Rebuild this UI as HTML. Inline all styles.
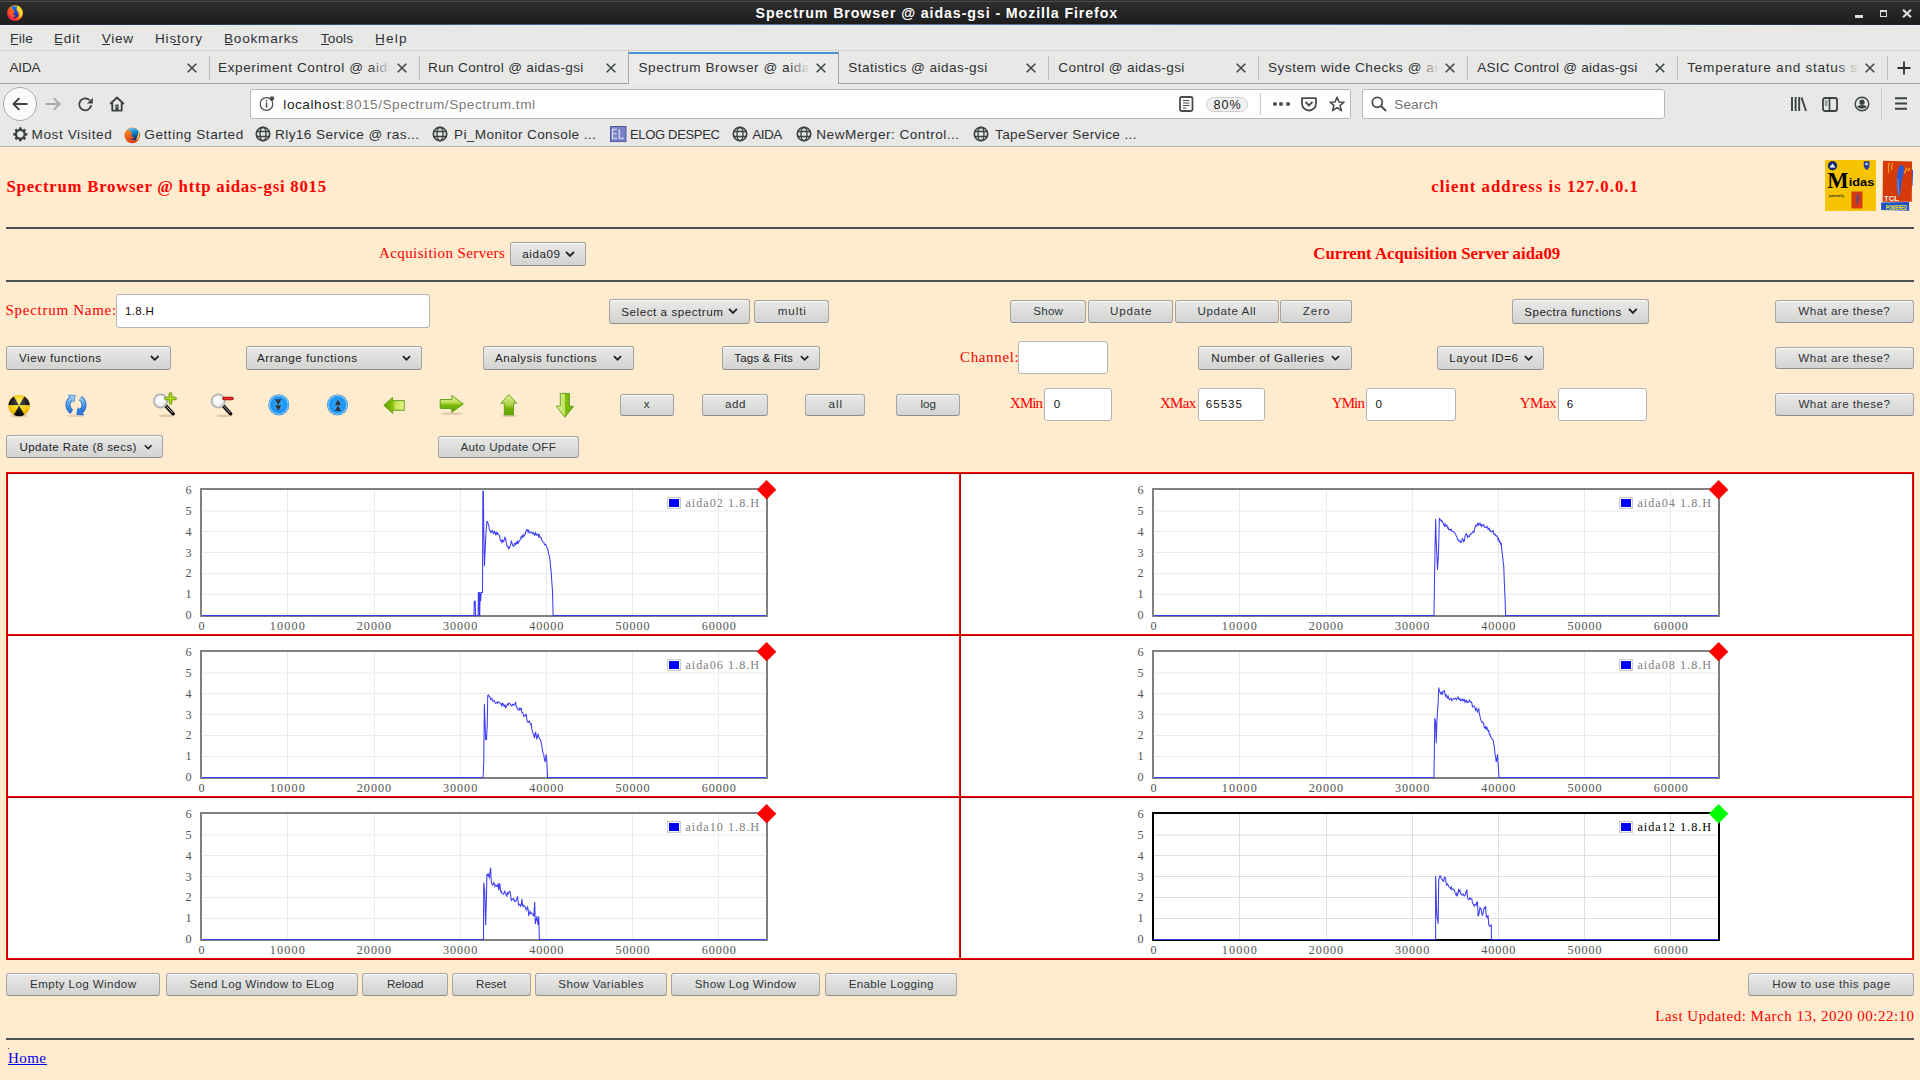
<!DOCTYPE html>
<html><head><meta charset="utf-8"><style>
*{margin:0;padding:0;box-sizing:border-box}
html,body{width:1920px;height:1080px;overflow:hidden;background:#ffebcd}
.t{position:absolute;white-space:pre}
.a{position:absolute}
.btn{position:absolute;border:1px solid #a4a4a4;border-bottom-color:#8e8e8e;border-radius:3px;background:linear-gradient(#e9e9e8,#d3d3d2);box-shadow:inset 0 1px 0 #fafafa}
.inp{position:absolute;border:1px solid #b4b4b4;border-radius:3px;background:#fff}
svg{position:absolute;overflow:visible}
</style></head><body>
<div class="a" style="left:0;top:0;width:1920px;height:25px;background:linear-gradient(#2f2f2f,#262626 12px,#1c1c1c)"></div>
<div class="a" style="left:0;top:1px;width:1920px;height:1px;background:#4e4e4e"></div>
<div class="a" style="left:0;top:24px;width:1920px;height:1px;background:linear-gradient(90deg,#1a2430,#4a6a94 30%,#5a7aa6 50%,#4a6a94 70%,#1a2430)"></div>
<svg style="left:7px;top:5px" width="16" height="16" viewBox="0 0 16 16">
<defs><linearGradient id="ffq" x1="0" y1="1" x2="1" y2="0"><stop offset="0" stop-color="#c8108f"/><stop offset="0.25" stop-color="#ff2a3a"/><stop offset="0.5" stop-color="#ff6a14"/><stop offset="0.75" stop-color="#ffc21a"/><stop offset="1" stop-color="#fff23a"/></linearGradient>
<linearGradient id="ffb" x1="0" y1="0" x2="0" y2="1"><stop offset="0" stop-color="#0a7cff"/><stop offset="1" stop-color="#2a1a9a"/></linearGradient></defs>
<circle cx="8" cy="8.2" r="7.9" fill="url(#ffq)"/>
<path d="M4 1.8 Q7 0.6 10.2 1.6 Q8.8 4 10.2 6 Q12.2 8 11.5 10.5 Q10.5 13 7.5 13.2 Q5 12.8 5.5 11.5 Q8 12 8.8 10.8 Q6.5 10.5 5.8 9.5 Q8 8 6.5 5.5 Q5.5 3.5 4 1.8Z" fill="url(#ffb)"/>
<path d="M10.2 0.6 Q14.5 2.5 15.4 7 Q15.5 11 12.5 13 Q13.5 9 11.5 6.5 Q9.5 4.5 10.2 0.6Z" fill="#ffe030" opacity="0.9"/>
<path d="M2 3 L3.5 4.5 L6.5 5 L7.5 6.8 L5.8 7.6 L5.5 10 L8.8 10.8 L6.5 12 Q3 11.5 2 8 Z" fill="#ff5a1a" opacity="0.85"/>
</svg>
<div class="t" style="left:755.60px;top:4.80px;font-family:'Liberation Sans', sans-serif;font-size:14.2px;line-height:16px;color:#ffffff;letter-spacing:0.913px;font-weight:bold;">Spectrum Browser @ aidas-gsi - Mozilla Firefox</div>
<div class="a" style="left:1855px;top:14.5px;width:8px;height:3px;background:#dcdcdc;box-shadow:0 0 1px #000"></div>
<div class="a" style="left:1879.5px;top:9.5px;width:7px;height:7px;border:1.5px solid #dcdcdc;border-top-width:2.5px"></div>
<svg style="left:1902px;top:8.5px" width="10" height="9" viewBox="0 0 10 9"><path d="M1 0.8 L9 8.2 M9 0.8 L1 8.2" stroke="#dcdcdc" stroke-width="2.2"/></svg>
<div class="a" style="left:0;top:25px;width:1920px;height:122px;background:#e8e8e7"></div>
<div class="a" style="left:0;top:50px;width:1920px;height:1px;background:#d4d4d3"></div>
<div class="t" style="left:10.10px;top:30.80px;font-family:'Liberation Sans', sans-serif;font-size:13.6px;line-height:15px;color:#2e3134;letter-spacing:0.252px;">File</div>
<div class="t" style="left:54.00px;top:30.80px;font-family:'Liberation Sans', sans-serif;font-size:13.6px;line-height:15px;color:#2e3134;letter-spacing:0.784px;">Edit</div>
<div class="t" style="left:101.70px;top:30.80px;font-family:'Liberation Sans', sans-serif;font-size:13.6px;line-height:15px;color:#2e3134;letter-spacing:0.733px;">View</div>
<div class="t" style="left:155.00px;top:30.80px;font-family:'Liberation Sans', sans-serif;font-size:13.6px;line-height:15px;color:#2e3134;letter-spacing:0.800px;">History</div>
<div class="t" style="left:224.00px;top:30.80px;font-family:'Liberation Sans', sans-serif;font-size:13.6px;line-height:15px;color:#2e3134;letter-spacing:0.764px;">Bookmarks</div>
<div class="t" style="left:320.70px;top:30.80px;font-family:'Liberation Sans', sans-serif;font-size:13.6px;line-height:15px;color:#2e3134;letter-spacing:0.166px;">Tools</div>
<div class="t" style="left:375.00px;top:30.80px;font-family:'Liberation Sans', sans-serif;font-size:13.6px;line-height:15px;color:#2e3134;letter-spacing:1.201px;">Help</div>
<div class="a" style="left:11px;top:44px;width:7px;height:1px;background:#2e3134"></div>
<div class="a" style="left:55px;top:44px;width:7px;height:1px;background:#2e3134"></div>
<div class="a" style="left:101.5px;top:44px;width:8px;height:1px;background:#2e3134"></div>
<div class="a" style="left:172.5px;top:44px;width:7px;height:1px;background:#2e3134"></div>
<div class="a" style="left:225px;top:44px;width:8px;height:1px;background:#2e3134"></div>
<div class="a" style="left:320.5px;top:44px;width:8px;height:1px;background:#2e3134"></div>
<div class="a" style="left:376px;top:44px;width:8px;height:1px;background:#2e3134"></div>
<div class="a" style="left:0;top:83px;width:628px;height:1px;background:#a3a3a3"></div>
<div class="a" style="left:839px;top:83px;width:1081px;height:1px;background:#a3a3a3"></div>
<div class="a" style="left:628px;top:51px;width:211px;height:33px;background:#ebebea;border-left:1px solid #a8a8a8;border-right:1px solid #a8a8a8"></div>
<div class="a" style="left:629px;top:52px;width:209px;height:2px;background:#4a90d9"></div>
<div class="a" style="left:209px;top:56px;width:1px;height:24px;background:#bdbdbc"></div>
<div class="a" style="left:419px;top:56px;width:1px;height:24px;background:#bdbdbc"></div>
<div class="a" style="left:1048px;top:56px;width:1px;height:24px;background:#bdbdbc"></div>
<div class="a" style="left:1258px;top:56px;width:1px;height:24px;background:#bdbdbc"></div>
<div class="a" style="left:1467px;top:56px;width:1px;height:24px;background:#bdbdbc"></div>
<div class="a" style="left:1677px;top:56px;width:1px;height:24px;background:#bdbdbc"></div>
<div class="a" style="left:1887px;top:56px;width:1px;height:24px;background:#bdbdbc"></div>
<div class="a" style="left:0;top:0;width:181px;height:1080px;overflow:hidden"><div class="t" style="left:9.40px;top:59.90px;font-family:'Liberation Sans', sans-serif;font-size:13.6px;line-height:15px;color:#2e3134;letter-spacing:-0.174px;">AIDA</div></div>
<div class="a" style="left:159px;top:58px;width:22px;height:20px;background:linear-gradient(90deg,rgba(232,232,231,0),#e8e8e7)"></div>
<svg style="left:187px;top:63px" width="10" height="10" viewBox="0 0 10 10"><path d="M0.7 0.7 L9.3 9.3 M9.3 0.7 L0.7 9.3" stroke="#3d4245" stroke-width="1.5"/></svg>
<div class="a" style="left:0;top:0;width:391px;height:1080px;overflow:hidden"><div class="t" style="left:218.00px;top:59.90px;font-family:'Liberation Sans', sans-serif;font-size:13.6px;line-height:15px;color:#2e3134;letter-spacing:0.579px;">Experiment Control @ aidas-gsi</div></div>
<div class="a" style="left:369px;top:58px;width:22px;height:20px;background:linear-gradient(90deg,rgba(232,232,231,0),#e8e8e7)"></div>
<svg style="left:397px;top:63px" width="10" height="10" viewBox="0 0 10 10"><path d="M0.7 0.7 L9.3 9.3 M9.3 0.7 L0.7 9.3" stroke="#3d4245" stroke-width="1.5"/></svg>
<div class="t" style="left:428.00px;top:59.90px;font-family:'Liberation Sans', sans-serif;font-size:13.6px;line-height:15px;color:#2e3134;letter-spacing:0.320px;">Run Control @ aidas-gsi</div>
<svg style="left:606px;top:63px" width="10" height="10" viewBox="0 0 10 10"><path d="M0.7 0.7 L9.3 9.3 M9.3 0.7 L0.7 9.3" stroke="#3d4245" stroke-width="1.5"/></svg>
<div class="a" style="left:0;top:0;width:810px;height:1080px;overflow:hidden"><div class="t" style="left:638.50px;top:59.90px;font-family:'Liberation Sans', sans-serif;font-size:13.6px;line-height:15px;color:#2e3134;letter-spacing:0.548px;">Spectrum Browser @ aidas-gsi</div></div>
<div class="a" style="left:788px;top:58px;width:22px;height:20px;background:linear-gradient(90deg,rgba(232,232,231,0),#ebebea)"></div>
<svg style="left:816px;top:63px" width="10" height="10" viewBox="0 0 10 10"><path d="M0.7 0.7 L9.3 9.3 M9.3 0.7 L0.7 9.3" stroke="#3d4245" stroke-width="1.5"/></svg>
<div class="t" style="left:848.30px;top:59.90px;font-family:'Liberation Sans', sans-serif;font-size:13.6px;line-height:15px;color:#2e3134;letter-spacing:0.423px;">Statistics @ aidas-gsi</div>
<svg style="left:1026px;top:63px" width="10" height="10" viewBox="0 0 10 10"><path d="M0.7 0.7 L9.3 9.3 M9.3 0.7 L0.7 9.3" stroke="#3d4245" stroke-width="1.5"/></svg>
<div class="t" style="left:1058.30px;top:59.90px;font-family:'Liberation Sans', sans-serif;font-size:13.6px;line-height:15px;color:#2e3134;letter-spacing:0.358px;">Control @ aidas-gsi</div>
<svg style="left:1236px;top:63px" width="10" height="10" viewBox="0 0 10 10"><path d="M0.7 0.7 L9.3 9.3 M9.3 0.7 L0.7 9.3" stroke="#3d4245" stroke-width="1.5"/></svg>
<div class="a" style="left:0;top:0;width:1439px;height:1080px;overflow:hidden"><div class="t" style="left:1268.00px;top:59.90px;font-family:'Liberation Sans', sans-serif;font-size:13.6px;line-height:15px;color:#2e3134;letter-spacing:0.514px;">System wide Checks @ aidas-gsi</div></div>
<div class="a" style="left:1417px;top:58px;width:22px;height:20px;background:linear-gradient(90deg,rgba(232,232,231,0),#e8e8e7)"></div>
<svg style="left:1445px;top:63px" width="10" height="10" viewBox="0 0 10 10"><path d="M0.7 0.7 L9.3 9.3 M9.3 0.7 L0.7 9.3" stroke="#3d4245" stroke-width="1.5"/></svg>
<div class="t" style="left:1477.30px;top:59.90px;font-family:'Liberation Sans', sans-serif;font-size:13.6px;line-height:15px;color:#2e3134;letter-spacing:0.215px;">ASIC Control @ aidas-gsi</div>
<svg style="left:1655px;top:63px" width="10" height="10" viewBox="0 0 10 10"><path d="M0.7 0.7 L9.3 9.3 M9.3 0.7 L0.7 9.3" stroke="#3d4245" stroke-width="1.5"/></svg>
<div class="a" style="left:0;top:0;width:1859px;height:1080px;overflow:hidden"><div class="t" style="left:1687.30px;top:59.90px;font-family:'Liberation Sans', sans-serif;font-size:13.6px;line-height:15px;color:#2e3134;letter-spacing:0.727px;">Temperature and status screen</div></div>
<div class="a" style="left:1837px;top:58px;width:22px;height:20px;background:linear-gradient(90deg,rgba(232,232,231,0),#e8e8e7)"></div>
<svg style="left:1865px;top:63px" width="10" height="10" viewBox="0 0 10 10"><path d="M0.7 0.7 L9.3 9.3 M9.3 0.7 L0.7 9.3" stroke="#3d4245" stroke-width="1.5"/></svg>
<svg style="left:1897px;top:61px" width="14" height="14" viewBox="0 0 14 14"><path d="M7 0.5 V13.5 M0.5 7 H13.5" stroke="#2e3134" stroke-width="1.8"/></svg>
<div class="a" style="left:3px;top:87px;width:34px;height:34px;border-radius:50%;background:#fafafa;border:1px solid #a9a9a9"></div>
<svg style="left:12px;top:97px" width="16" height="14" viewBox="0 0 16 14"><path d="M15.5 7 H1.5 M7.3 1.2 L1.5 7 L7.3 12.8" stroke="#3d4245" stroke-width="1.9" fill="none"/></svg>
<svg style="left:45px;top:97px" width="16" height="14" viewBox="0 0 16 14"><path d="M0.5 7 H14.5 M8.7 1.2 L14.5 7 L8.7 12.8" stroke="#a9a9a9" stroke-width="1.9" fill="none"/></svg>
<svg style="left:78px;top:97px" width="16" height="14" viewBox="0 0 16 14"><path d="M13.2 8.2 A6 6 0 1 1 11.6 3.2" stroke="#3d4245" stroke-width="1.9" fill="none"/><path d="M14.8 0.8 V6.6 H9 Z" fill="#3d4245"/></svg>
<svg style="left:109px;top:96px" width="16" height="16" viewBox="0 0 16 16"><path d="M1.2 8 L8 1.5 L14.8 8" stroke="#3d4245" stroke-width="1.9" fill="none" stroke-linejoin="round"/><path d="M3.3 7 V14.6 H12.7 V7" stroke="#3d4245" stroke-width="1.9" fill="none" stroke-linejoin="round"/><rect x="6.4" y="8.5" width="3.2" height="6" fill="#3d4245"/><rect x="7.5" y="10.3" width="1" height="1" fill="#ebebea"/></svg>
<div class="a" style="left:250px;top:89px;width:1101px;height:30px;background:#fff;border:1px solid #b8b8b8;border-radius:3px"></div>
<svg style="left:259px;top:95px" width="17" height="17" viewBox="0 0 17 17"><circle cx="7.5" cy="9" r="6.3" stroke="#4a4d50" stroke-width="1.2" fill="none"/><rect x="6.8" y="7.5" width="1.5" height="5" fill="#4a4d50"/><rect x="6.8" y="5" width="1.5" height="1.5" fill="#4a4d50"/><circle cx="13" cy="3.5" r="2.2" fill="#4a4d50"/></svg>
<div class="t" style="left:283.30px;top:97.20px;font-family:'Liberation Sans', sans-serif;font-size:13.6px;line-height:15px;color:#1a1a1a;letter-spacing:0.566px;">localhost</div>
<div class="t" style="left:341.50px;top:97.20px;font-family:'Liberation Sans', sans-serif;font-size:13.6px;line-height:15px;color:#7a7a7a;letter-spacing:0.527px;">:8015/Spectrum/Spectrum.tml</div>
<svg style="left:1179px;top:96px" width="15" height="16" viewBox="0 0 15 16"><rect x="1" y="1" width="12.5" height="14" rx="1.5" stroke="#4a4d50" stroke-width="1.8" fill="none"/><path d="M4 4.5 H10.5 M4 7 H10.5 M4 9.5 H10.5 M4 12 H7.5" stroke="#4a4d50" stroke-width="1"/></svg>
<div class="a" style="left:1206px;top:97px;width:42px;height:15px;border-radius:8px;background:#f0f0f0;border:1px solid #cfcfcf"></div>
<div class="t" style="left:1213.60px;top:98.00px;font-family:'Liberation Sans', sans-serif;font-size:12.6px;line-height:14px;color:#1a1a1a;letter-spacing:0.893px;">80%</div>
<div class="a" style="left:1260px;top:93px;width:1px;height:22px;background:#c8c8c8"></div>
<div class="a" style="left:1272.5px;top:102px;width:4px;height:4px;border-radius:50%;background:#4a4d50"></div>
<div class="a" style="left:1279px;top:102px;width:4px;height:4px;border-radius:50%;background:#4a4d50"></div>
<div class="a" style="left:1285.5px;top:102px;width:4px;height:4px;border-radius:50%;background:#4a4d50"></div>
<svg style="left:1301px;top:97px" width="16" height="15" viewBox="0 0 16 15"><path d="M1 1.2 H15 V6.5 A7 7 0 0 1 1 6.5 Z" stroke="#4a4d50" stroke-width="1.8" fill="none" stroke-linejoin="round"/><path d="M4.5 5 L8 8.5 L11.5 5" stroke="#4a4d50" stroke-width="1.8" fill="none"/></svg>
<svg style="left:1329px;top:96px" width="16" height="16" viewBox="0 0 16 16"><path d="M8 1.3 L10 6 L15 6.2 L11.1 9.4 L12.4 14.6 L8 11.7 L3.6 14.6 L4.9 9.4 L1 6.2 L6 6 Z" stroke="#4a4d50" stroke-width="1.6" fill="none" stroke-linejoin="round"/></svg>
<div class="a" style="left:1362px;top:89px;width:303px;height:30px;background:#fff;border:1px solid #b8b8b8;border-radius:3px"></div>
<svg style="left:1371px;top:96px" width="16" height="16" viewBox="0 0 16 16"><circle cx="6.3" cy="6.3" r="5" stroke="#4a4d50" stroke-width="1.8" fill="none"/><path d="M10 10 L15 15" stroke="#4a4d50" stroke-width="2"/></svg>
<div class="t" style="left:1394.30px;top:97.20px;font-family:'Liberation Sans', sans-serif;font-size:13.6px;line-height:15px;color:#737373;letter-spacing:0.098px;">Search</div>
<svg style="left:1791px;top:97px" width="16" height="15" viewBox="0 0 16 15"><path d="M1 0 V14 M4.6 0 V14 M8.2 0 V14 M10.5 0.5 L15 14" stroke="#3d4245" stroke-width="1.9"/></svg>
<svg style="left:1822px;top:97px" width="16" height="15" viewBox="0 0 16 15"><rect x="1" y="1" width="14" height="13" rx="2" stroke="#3d4245" stroke-width="1.8" fill="none"/><path d="M7.5 1 V14" stroke="#3d4245" stroke-width="1.6"/><path d="M2.8 4 H5.5 M2.8 6 H5.5 M2.8 8 H5.5" stroke="#3d4245" stroke-width="0.9"/></svg>
<svg style="left:1854px;top:96px" width="16" height="16" viewBox="0 0 16 16"><circle cx="8" cy="8" r="6.8" stroke="#3d4245" stroke-width="1.4" fill="none"/><circle cx="8" cy="6.2" r="2.6" fill="#3d4245"/><path d="M3.2 11 Q8 14.5 12.8 11 Q12 9 8 9 Q4 9 3.2 11Z" fill="#3d4245"/></svg>
<div class="a" style="left:1881px;top:87px;width:1px;height:33px;background:#cfcfcf"></div>
<svg style="left:1895px;top:97px" width="13" height="13" viewBox="0 0 13 13"><path d="M0 1.2 H12 M0 6.5 H12 M0 11.8 H12" stroke="#3d4245" stroke-width="1.9"/></svg>
<svg style="left:12.5px;top:127px" width="15" height="15" viewBox="0 0 15 15"><g transform="translate(7.3,7.3)"><circle r="4.4" stroke="#3d4245" stroke-width="2.2" fill="none"/><rect x="-1.3" y="-7" width="2.6" height="3.2" fill="#3d4245" transform="rotate(0)"/><rect x="-1.3" y="-7" width="2.6" height="3.2" fill="#3d4245" transform="rotate(45)"/><rect x="-1.3" y="-7" width="2.6" height="3.2" fill="#3d4245" transform="rotate(90)"/><rect x="-1.3" y="-7" width="2.6" height="3.2" fill="#3d4245" transform="rotate(135)"/><rect x="-1.3" y="-7" width="2.6" height="3.2" fill="#3d4245" transform="rotate(180)"/><rect x="-1.3" y="-7" width="2.6" height="3.2" fill="#3d4245" transform="rotate(225)"/><rect x="-1.3" y="-7" width="2.6" height="3.2" fill="#3d4245" transform="rotate(270)"/><rect x="-1.3" y="-7" width="2.6" height="3.2" fill="#3d4245" transform="rotate(315)"/></g></svg>
<div class="t" style="left:31.50px;top:126.80px;font-family:'Liberation Sans', sans-serif;font-size:13.6px;line-height:15px;color:#2e3134;letter-spacing:0.588px;">Most Visited</div>
<svg style="left:124px;top:127px" width="16" height="16" viewBox="0 0 16 16">
<defs><linearGradient id="fg2b" x1="0" y1="0" x2="0.3" y2="1"><stop offset="0" stop-color="#7ad0f8"/><stop offset="0.45" stop-color="#0a90d8"/><stop offset="1" stop-color="#0a2a80"/></linearGradient>
<linearGradient id="fg2o" x1="0" y1="0" x2="0.3" y2="1"><stop offset="0" stop-color="#ff9a20"/><stop offset="1" stop-color="#d8401a"/></linearGradient></defs>
<circle cx="8.2" cy="8.4" r="7.8" fill="url(#fg2o)"/>
<path d="M3.8 1.6 Q8 0.2 12.4 1.8 Q15.5 4.5 15.6 8.2 Q15 12 11.8 13 Q8.5 13.5 6.5 11.8 Q10 12 10.8 10.5 Q8 10 7.2 8.2 Q9 6.5 7.8 4.8 Q6 4.2 5 3.2 Q4.4 2.6 3.8 1.6Z" fill="url(#fg2b)"/>
<path d="M14.2 4.5 Q16.2 8.2 14.5 11.5 Q13 13 11.5 13.2 Q14 10.5 14.2 4.5Z" fill="#ffe23a"/>
</svg>
<div class="t" style="left:144.30px;top:126.80px;font-family:'Liberation Sans', sans-serif;font-size:13.6px;line-height:15px;color:#2e3134;letter-spacing:0.538px;">Getting Started</div>
<svg style="left:255px;top:126px" width="16" height="16" viewBox="0 0 16 16"><circle cx="8" cy="8" r="6.7" stroke="#3d4245" stroke-width="1.7" fill="none"/><ellipse cx="8" cy="8" rx="3" ry="6.7" stroke="#3d4245" stroke-width="1.4" fill="none"/><path d="M1.3 5.5 H14.7 M1.3 10.5 H14.7" stroke="#3d4245" stroke-width="1.4"/></svg>
<div class="t" style="left:275.00px;top:126.80px;font-family:'Liberation Sans', sans-serif;font-size:13.6px;line-height:15px;color:#2e3134;letter-spacing:0.412px;">Rly16 Service @ ras...</div>
<svg style="left:431.5px;top:126px" width="16" height="16" viewBox="0 0 16 16"><circle cx="8" cy="8" r="6.7" stroke="#3d4245" stroke-width="1.7" fill="none"/><ellipse cx="8" cy="8" rx="3" ry="6.7" stroke="#3d4245" stroke-width="1.4" fill="none"/><path d="M1.3 5.5 H14.7 M1.3 10.5 H14.7" stroke="#3d4245" stroke-width="1.4"/></svg>
<div class="t" style="left:454.00px;top:126.80px;font-family:'Liberation Sans', sans-serif;font-size:13.6px;line-height:15px;color:#2e3134;letter-spacing:0.383px;">Pi_Monitor Console ...</div>
<svg style="left:610px;top:126px" width="17" height="16" viewBox="0 0 17 16"><rect x="0.5" y="0.5" width="15.5" height="15" fill="#7a82c6" stroke="#5058a8" stroke-width="1"/><path d="M7 3.5 H2.8 V12.5 H7 M2.8 8 H6.5 M9.5 3.5 V12.5 H14" stroke="#e4e6f6" stroke-width="1.6" fill="none"/><path d="M7 3.5 H2.8 V12.5 H7 M2.8 8 H6.5 M9.5 3.5 V12.5 H14" stroke="#4a509a" stroke-width="0.4" fill="none" transform="translate(0.6,0.6)"/></svg>
<div class="t" style="left:630.00px;top:126.80px;font-family:'Liberation Sans', sans-serif;font-size:13px;line-height:15px;color:#2e3134;letter-spacing:-0.331px;">ELOG DESPEC</div>
<svg style="left:731.5px;top:126px" width="16" height="16" viewBox="0 0 16 16"><circle cx="8" cy="8" r="6.7" stroke="#3d4245" stroke-width="1.7" fill="none"/><ellipse cx="8" cy="8" rx="3" ry="6.7" stroke="#3d4245" stroke-width="1.4" fill="none"/><path d="M1.3 5.5 H14.7 M1.3 10.5 H14.7" stroke="#3d4245" stroke-width="1.4"/></svg>
<div class="t" style="left:752.30px;top:126.80px;font-family:'Liberation Sans', sans-serif;font-size:13.6px;line-height:15px;color:#2e3134;letter-spacing:-0.554px;">AIDA</div>
<svg style="left:796px;top:126px" width="16" height="16" viewBox="0 0 16 16"><circle cx="8" cy="8" r="6.7" stroke="#3d4245" stroke-width="1.7" fill="none"/><ellipse cx="8" cy="8" rx="3" ry="6.7" stroke="#3d4245" stroke-width="1.4" fill="none"/><path d="M1.3 5.5 H14.7 M1.3 10.5 H14.7" stroke="#3d4245" stroke-width="1.4"/></svg>
<div class="t" style="left:816.30px;top:126.80px;font-family:'Liberation Sans', sans-serif;font-size:13.6px;line-height:15px;color:#2e3134;letter-spacing:0.491px;">NewMerger: Control...</div>
<svg style="left:972.5px;top:126px" width="16" height="16" viewBox="0 0 16 16"><circle cx="8" cy="8" r="6.7" stroke="#3d4245" stroke-width="1.7" fill="none"/><ellipse cx="8" cy="8" rx="3" ry="6.7" stroke="#3d4245" stroke-width="1.4" fill="none"/><path d="M1.3 5.5 H14.7 M1.3 10.5 H14.7" stroke="#3d4245" stroke-width="1.4"/></svg>
<div class="t" style="left:995.00px;top:126.80px;font-family:'Liberation Sans', sans-serif;font-size:13.6px;line-height:15px;color:#2e3134;letter-spacing:0.369px;">TapeServer Service ...</div>
<div class="a" style="left:0;top:146px;width:1920px;height:1px;background:#b4b4b3"></div>
<div class="t" style="left:6.50px;top:176.80px;font-family:'Liberation Serif', serif;font-size:16.8px;line-height:19px;color:#ff0000;letter-spacing:0.736px;font-weight:bold;">Spectrum Browser @ http aidas-gsi 8015</div>
<div class="t" style="left:1431.25px;top:177.25px;font-family:'Liberation Serif', serif;font-size:16.8px;line-height:19px;color:#ff0000;letter-spacing:1.003px;font-weight:bold;">client address is 127.0.0.1</div>
<svg style="left:1825px;top:160px" width="51" height="51" viewBox="0 0 51 51">
<rect width="51" height="51" fill="#f6c400"/>
<circle cx="7.5" cy="5.8" r="4.7" fill="#1a2f6a"/><path d="M4.6 7.6 L7.5 3.6 L10.4 7.6Z" fill="#fff"/>
<path d="M38.8 1.3 H44.5 V5.5 Q44.5 8.6 41.6 9.9 Q38.8 8.6 38.8 5.5Z" fill="#2a3f9a"/><rect x="40.3" y="3" width="2.6" height="2" fill="#c8d0f0"/>
<text x="2.3" y="28.2" font-family="Liberation Serif" font-weight="bold" font-size="23" textLength="21.4" lengthAdjust="spacingAndGlyphs" fill="#000">M</text>
<text x="23.7" y="26" font-family="Liberation Sans" font-weight="bold" font-size="11.5" textLength="25.6" lengthAdjust="spacingAndGlyphs" fill="#000">idas</text>
<text x="4" y="37" font-family="Liberation Sans" font-weight="bold" font-size="3.6" textLength="15" lengthAdjust="spacingAndGlyphs" fill="#222">powered by</text>
<rect x="26.5" y="31.5" width="11" height="17" fill="#d33a10"/>
<path d="M32 34.5 Q34 33.8 33.5 38 Q33 43 32.2 45.5 Q31.3 41 32 34.5Z" fill="#2a55c0"/>
</svg>
<svg style="left:1880px;top:160px" width="34" height="52" viewBox="0 0 34 52">
<path d="M29.5 9 L33 10 L32.5 26 L29.5 26Z" fill="#2050c8"/>
<path d="M1 42.5 L29 42 L29.2 50.8 L1.2 50Z" fill="#2050c8"/>
<path d="M3 0.8 L32 1.6 L31.8 41.8 L2.6 41.8 Z" fill="#d63a08"/>
<path d="M20.5 4.5 Q25.5 5 23.5 13 Q21 22 20.5 31 Q19.5 37.5 18 36 Q16.5 28 16.8 19 Q17.5 8 20.5 4.5Z" fill="#2a5ad6"/>
<path d="M18 19 Q17.5 28 19 35" stroke="#a8c0ff" stroke-width="0.6" fill="none"/>
<path d="M9.5 2.5 Q7.5 6 9 13 M12.5 3 Q11 6 12 10 M27 7.5 Q26 11 24 13.5 M29.5 8 Q29 10 28 11" stroke="#f2b020" stroke-width="1.1" fill="none"/>
<text x="4" y="41" font-family="Liberation Sans" font-weight="bold" font-size="7.5" textLength="15" lengthAdjust="spacingAndGlyphs" fill="#f0f0f0">TCL</text>
<text x="6" y="49.6" font-family="Liberation Sans" font-weight="bold" font-size="6.6" textLength="21" lengthAdjust="spacingAndGlyphs" fill="#f0e830">POWERED</text>
</svg>
<div class="a" style="left:6px;top:227px;width:1908px;height:2px;background:#4f5358"></div>
<div class="t" style="left:379.00px;top:245.00px;font-family:'Liberation Serif', serif;font-size:15px;line-height:16px;color:#ff0000;letter-spacing:0.395px;">Acquisition Servers</div>
<div class="btn" style="left:510px;top:242px;width:76px;height:24px"></div>
<div class="t" style="left:522.25px;top:247.25px;font-family:'Liberation Sans', sans-serif;font-size:11.6px;line-height:13px;color:#1e2224;letter-spacing:0.557px;">aida09</div>
<svg style="left:565.0px;top:251.1px" width="10.0" height="6" viewBox="0 0 10 6"><path d="M1 0.9 L5 4.9 L9 0.9" stroke="#1e2224" stroke-width="1.9" fill="none"/></svg>
<div class="t" style="left:1313.30px;top:243.75px;font-family:'Liberation Serif', serif;font-size:16.8px;line-height:19px;color:#ff0000;letter-spacing:-0.001px;font-weight:bold;">Current Acquisition Server aida09</div>
<div class="a" style="left:6px;top:280px;width:1908px;height:2px;background:#4f5358"></div>
<div class="t" style="left:5.50px;top:302.00px;font-family:'Liberation Serif', serif;font-size:15px;line-height:16px;color:#ff0000;letter-spacing:0.727px;">Spectrum Name:</div>
<div class="inp" style="left:116px;top:294px;width:314px;height:34px"></div>
<div class="t" style="left:125.00px;top:303.95px;font-family:'Liberation Sans', sans-serif;font-size:11.6px;line-height:13px;color:#111111;letter-spacing:0.303px;">1.8.H</div>
<div class="btn" style="left:609px;top:299px;width:141px;height:25px"></div>
<div class="t" style="left:621.30px;top:304.55px;font-family:'Liberation Sans', sans-serif;font-size:11.6px;line-height:13px;color:#1e2224;letter-spacing:0.553px;">Select a spectrum</div>
<svg style="left:728.4px;top:308.3px" width="9.9" height="6" viewBox="0 0 10 6"><path d="M1 0.9 L5 4.9 L9 0.9" stroke="#1e2224" stroke-width="1.9" fill="none"/></svg>
<div class="btn" style="left:754px;top:300px;width:75px;height:23px"></div>
<div class="t" style="left:777.75px;top:304.05px;font-family:'Liberation Sans', sans-serif;font-size:11.6px;line-height:13px;color:#2e3436;letter-spacing:0.924px;">multi</div>
<div class="btn" style="left:1010px;top:300px;width:76px;height:23px"></div>
<div class="t" style="left:1033.31px;top:304.05px;font-family:'Liberation Sans', sans-serif;font-size:11.6px;line-height:13px;color:#2e3436;letter-spacing:0.216px;">Show</div>
<div class="btn" style="left:1088px;top:300px;width:85px;height:23px"></div>
<div class="t" style="left:1110.11px;top:304.05px;font-family:'Liberation Sans', sans-serif;font-size:11.6px;line-height:13px;color:#2e3436;letter-spacing:0.787px;">Update</div>
<div class="btn" style="left:1175px;top:300px;width:104px;height:23px"></div>
<div class="t" style="left:1197.62px;top:304.05px;font-family:'Liberation Sans', sans-serif;font-size:11.6px;line-height:13px;color:#2e3436;letter-spacing:0.571px;">Update All</div>
<div class="btn" style="left:1280px;top:300px;width:72px;height:23px"></div>
<div class="t" style="left:1302.80px;top:304.05px;font-family:'Liberation Sans', sans-serif;font-size:11.6px;line-height:13px;color:#2e3436;letter-spacing:0.902px;">Zero</div>
<div class="btn" style="left:1512px;top:299px;width:137px;height:25px"></div>
<div class="t" style="left:1524.30px;top:304.55px;font-family:'Liberation Sans', sans-serif;font-size:11.6px;line-height:13px;color:#1e2224;letter-spacing:0.464px;">Spectra functions</div>
<svg style="left:1627.9px;top:308.3px" width="9.7" height="6" viewBox="0 0 10 6"><path d="M1 0.9 L5 4.9 L9 0.9" stroke="#1e2224" stroke-width="1.9" fill="none"/></svg>
<div class="btn" style="left:1775px;top:300px;width:139px;height:23px"></div>
<div class="t" style="left:1798.33px;top:304.05px;font-family:'Liberation Sans', sans-serif;font-size:11.6px;line-height:13px;color:#2e3436;letter-spacing:0.459px;">What are these?</div>
<div class="btn" style="left:6px;top:346px;width:165px;height:24px"></div>
<div class="t" style="left:19.00px;top:350.88px;font-family:'Liberation Sans', sans-serif;font-size:11.6px;line-height:13px;color:#1e2224;letter-spacing:0.569px;">View functions</div>
<svg style="left:150.0px;top:354.7px" width="9.5" height="6" viewBox="0 0 10 6"><path d="M1 0.9 L5 4.9 L9 0.9" stroke="#1e2224" stroke-width="1.9" fill="none"/></svg>
<div class="btn" style="left:246px;top:346px;width:176px;height:24px"></div>
<div class="t" style="left:257.00px;top:350.88px;font-family:'Liberation Sans', sans-serif;font-size:11.6px;line-height:13px;color:#1e2224;letter-spacing:0.573px;">Arrange functions</div>
<svg style="left:401.8px;top:354.7px" width="9.0" height="6" viewBox="0 0 10 6"><path d="M1 0.9 L5 4.9 L9 0.9" stroke="#1e2224" stroke-width="1.9" fill="none"/></svg>
<div class="btn" style="left:483px;top:346px;width:151px;height:24px"></div>
<div class="t" style="left:495.00px;top:350.88px;font-family:'Liberation Sans', sans-serif;font-size:11.6px;line-height:13px;color:#1e2224;letter-spacing:0.515px;">Analysis functions</div>
<svg style="left:613.0px;top:354.7px" width="9.0" height="6" viewBox="0 0 10 6"><path d="M1 0.9 L5 4.9 L9 0.9" stroke="#1e2224" stroke-width="1.9" fill="none"/></svg>
<div class="btn" style="left:722px;top:346px;width:98px;height:24px"></div>
<div class="t" style="left:734.25px;top:350.88px;font-family:'Liberation Sans', sans-serif;font-size:11.6px;line-height:13px;color:#1e2224;letter-spacing:0.121px;">Tags &amp; Fits</div>
<svg style="left:800.0px;top:354.7px" width="9.2" height="6" viewBox="0 0 10 6"><path d="M1 0.9 L5 4.9 L9 0.9" stroke="#1e2224" stroke-width="1.9" fill="none"/></svg>
<div class="t" style="left:960.00px;top:349.00px;font-family:'Liberation Serif', serif;font-size:15px;line-height:16px;color:#ff0000;letter-spacing:0.645px;">Channel:</div>
<div class="inp" style="left:1018px;top:341px;width:90px;height:33px"></div>
<div class="btn" style="left:1198px;top:346px;width:154px;height:24px"></div>
<div class="t" style="left:1211.25px;top:350.88px;font-family:'Liberation Sans', sans-serif;font-size:11.6px;line-height:13px;color:#1e2224;letter-spacing:0.539px;">Number of Galleries</div>
<svg style="left:1331.2px;top:354.7px" width="8.8" height="6" viewBox="0 0 10 6"><path d="M1 0.9 L5 4.9 L9 0.9" stroke="#1e2224" stroke-width="1.9" fill="none"/></svg>
<div class="btn" style="left:1437px;top:346px;width:107px;height:24px"></div>
<div class="t" style="left:1449.25px;top:350.88px;font-family:'Liberation Sans', sans-serif;font-size:11.6px;line-height:13px;color:#1e2224;letter-spacing:0.586px;">Layout ID=6</div>
<svg style="left:1523.8px;top:354.7px" width="9.2" height="6" viewBox="0 0 10 6"><path d="M1 0.9 L5 4.9 L9 0.9" stroke="#1e2224" stroke-width="1.9" fill="none"/></svg>
<div class="btn" style="left:1775px;top:347px;width:139px;height:22px"></div>
<div class="t" style="left:1798.33px;top:350.50px;font-family:'Liberation Sans', sans-serif;font-size:11.6px;line-height:13px;color:#2e3436;letter-spacing:0.459px;">What are these?</div>
<svg style="left:0;top:380px" width="600" height="50" viewBox="0 380 600 50">
<defs>
<radialGradient id="radY" cx="0.5" cy="0.35" r="0.75"><stop offset="0" stop-color="#fff27a"/><stop offset="0.6" stop-color="#f2c800"/><stop offset="1" stop-color="#d09a00"/></radialGradient>
<radialGradient id="radK" cx="0.5" cy="0.3" r="0.8"><stop offset="0" stop-color="#555"/><stop offset="0.6" stop-color="#111"/><stop offset="1" stop-color="#000"/></radialGradient>
<linearGradient id="refG" gradientUnits="userSpaceOnUse" x1="0" y1="396" x2="0" y2="414"><stop offset="0" stop-color="#b5dcff"/><stop offset="0.5" stop-color="#4a9ae8"/><stop offset="1" stop-color="#1666d0"/></linearGradient>
<radialGradient id="lensG" cx="0.45" cy="0.4" r="0.6"><stop offset="0" stop-color="#ffffff"/><stop offset="0.7" stop-color="#f0f0f0"/><stop offset="1" stop-color="#d8d8d8"/></radialGradient>
<radialGradient id="blueG" cx="0.5" cy="0.5" r="0.5"><stop offset="0" stop-color="#30b0ff"/><stop offset="0.75" stop-color="#1a90f0"/><stop offset="0.9" stop-color="#80d0ff"/><stop offset="1" stop-color="#0d5fc0"/></radialGradient>
<linearGradient id="gH" x1="0" y1="0" x2="1" y2="0"><stop offset="0" stop-color="#5aa000"/><stop offset="0.45" stop-color="#8cc010"/><stop offset="0.55" stop-color="#c4e050"/><stop offset="1" stop-color="#e8f48a"/></linearGradient>
<linearGradient id="gV" x1="0" y1="0" x2="0" y2="1"><stop offset="0" stop-color="#e4f4a0"/><stop offset="0.45" stop-color="#b8dc50"/><stop offset="0.55" stop-color="#80bc10"/><stop offset="1" stop-color="#5a9c00"/></linearGradient>
<linearGradient id="gU" x1="0" y1="0" x2="0" y2="1"><stop offset="0" stop-color="#e8f4a0"/><stop offset="0.5" stop-color="#a8d040"/><stop offset="0.7" stop-color="#70b000"/><stop offset="1" stop-color="#60a400"/></linearGradient>
<linearGradient id="gD" x1="0" y1="0" x2="1" y2="0"><stop offset="0" stop-color="#e8f4a8"/><stop offset="0.5" stop-color="#c0e060"/><stop offset="0.52" stop-color="#84c010"/><stop offset="1" stop-color="#6aac00"/></linearGradient>
</defs>
<ellipse cx="19" cy="416" rx="9" ry="1.6" fill="rgba(90,60,20,0.18)"/>
<circle cx="19.1" cy="405.6" r="10.9" fill="#e8a020" opacity="0.6"/>
<circle cx="19.1" cy="405.6" r="10.5" fill="url(#radY)"/>
<path d="M19.1 405.6 L29.6 405.6 A10.5 10.5 0 0 0 24.35 396.5Z M19.1 405.6 L13.85 396.5 A10.5 10.5 0 0 0 8.6 405.6Z M19.1 405.6 L13.85 414.7 A10.5 10.5 0 0 0 24.35 414.7Z" fill="url(#radK)"/>
<path d="M8.8 405.6 H29.4" stroke="#ffe040" stroke-width="0.8"/>
<ellipse cx="76" cy="415.8" rx="9" ry="1.2" fill="rgba(90,60,20,0.15)"/>
<path d="M71.76 411.78 A8 8 0 0 1 71.07 398.70" stroke="#2a6cc8" stroke-width="5" fill="none"/>
<path d="M80.24 398.22 A8 8 0 0 1 80.93 411.30" stroke="#2a6cc8" stroke-width="5" fill="none"/>
<path d="M68.37 395.23 L75.17 395.49 L73.78 402.16Z" fill="#2a6cc8" stroke="#2a6cc8" stroke-width="1" stroke-linejoin="round"/>
<path d="M83.63 414.77 L76.83 414.51 L78.22 407.84Z" fill="#2a6cc8" stroke="#2a6cc8" stroke-width="1" stroke-linejoin="round"/>
<path d="M71.64 411.71 A8 8 0 0 1 71.07 398.70" stroke="url(#refG)" stroke-width="3.2" fill="none"/>
<path d="M80.36 398.29 A8 8 0 0 1 80.93 411.30" stroke="url(#refG)" stroke-width="3.2" fill="none"/>
<path d="M68.37 395.23 L75.17 395.49 L73.78 402.16Z" fill="#8cc4f4"/>
<path d="M83.63 414.77 L76.83 414.51 L78.22 407.84Z" fill="#2c7ee0"/>
<ellipse cx="166" cy="415.8" rx="7.5" ry="1.3" fill="rgba(90,60,20,0.2)"/>
<path d="M166 406 L173.2 413.8" stroke="#000" stroke-width="3.4" stroke-linecap="round"/>
<path d="M166.8 406.5 L172.5 412.8" stroke="#fff" stroke-width="0.8" stroke-linecap="round"/>
<circle cx="160.5" cy="401" r="6.6" fill="url(#lensG)" stroke="#b4b4b4" stroke-width="1.8"/>
<path d="M170.5 394 V403 M166 398.5 H175" stroke="#4c8a00" stroke-width="3.6" stroke-linecap="round"/>
<path d="M170.5 394 V403 M166 398.5 H175" stroke="#b8dc20" stroke-width="2" stroke-linecap="round"/>
<ellipse cx="223.5" cy="415.8" rx="7.5" ry="1.3" fill="rgba(90,60,20,0.2)"/>
<path d="M223.5 406 L230.7 413.8" stroke="#000" stroke-width="3.4" stroke-linecap="round"/>
<path d="M224.3 406.5 L230 412.8" stroke="#fff" stroke-width="0.8" stroke-linecap="round"/>
<circle cx="218.2" cy="401" r="6.6" fill="url(#lensG)" stroke="#b4b4b4" stroke-width="1.8"/>
<path d="M224 398.5 H232" stroke="#a00000" stroke-width="3.4" stroke-linecap="round"/>
<path d="M224 398.5 H232" stroke="#e83030" stroke-width="1.8" stroke-linecap="round"/>
<circle cx="278.8" cy="404.9" r="10.4" fill="url(#blueG)"/>
<path d="M278.3 398.5 V411" stroke="#8ad8ff" stroke-width="0.7"/>
<path d="M275.2 399.2 H281.3 L278.25 405.2Z M275.2 405.2 H281.3 L278.25 411Z" fill="#333"/>
<circle cx="337.5" cy="404.9" r="10.4" fill="url(#blueG)"/>
<path d="M338 398.5 V411" stroke="#8ad8ff" stroke-width="0.7"/>
<path d="M334.9 405.2 H341 L337.95 399.2Z M334.9 411 H341 L337.95 405.2Z" fill="#333"/>
<path d="M383.8 405.3 L392.6 397.3 V400.6 H404.3 V410.3 H392.6 V413.4Z" fill="url(#gH)" stroke="#5a9c18" stroke-width="0.9" stroke-linejoin="round"/>
<ellipse cx="452" cy="413.6" rx="11" ry="1.1" fill="rgba(90,60,20,0.2)"/>
<path d="M463.4 404 L451.8 395.4 V399.5 H440.2 V408.5 H451.8 V412.3Z" fill="url(#gV)" stroke="#5a9c18" stroke-width="0.9" stroke-linejoin="round"/>
<ellipse cx="509" cy="415.8" rx="8" ry="1.2" fill="rgba(90,60,20,0.2)"/>
<path d="M508.8 394.6 L516.7 403.2 H513.5 V414.9 H504.3 V403.2 H500.8Z" fill="url(#gU)" stroke="#5a9c18" stroke-width="0.9" stroke-linejoin="round"/>
<path d="M564.9 417.3 L573.7 406.2 H569.4 V393.4 H560.3 V406.2 H556.3Z" fill="url(#gD)" stroke="#5a9c18" stroke-width="0.9" stroke-linejoin="round"/>
</svg>
<div class="btn" style="left:620px;top:394px;width:54px;height:22px"></div>
<div class="t" style="left:643.85px;top:397.15px;font-family:'Liberation Sans', sans-serif;font-size:11.6px;line-height:13px;color:#2e3436;letter-spacing:0.000px;">x</div>
<div class="btn" style="left:702px;top:394px;width:66px;height:22px"></div>
<div class="t" style="left:724.94px;top:397.15px;font-family:'Liberation Sans', sans-serif;font-size:11.6px;line-height:13px;color:#2e3436;letter-spacing:0.611px;">add</div>
<div class="btn" style="left:805px;top:394px;width:60px;height:22px"></div>
<div class="t" style="left:828.47px;top:397.15px;font-family:'Liberation Sans', sans-serif;font-size:11.6px;line-height:13px;color:#2e3436;letter-spacing:1.015px;">all</div>
<div class="btn" style="left:896px;top:394px;width:64px;height:22px"></div>
<div class="t" style="left:920.38px;top:397.15px;font-family:'Liberation Sans', sans-serif;font-size:11.6px;line-height:13px;color:#2e3436;letter-spacing:0.029px;">log</div>
<div class="t" style="left:1010.00px;top:395.10px;font-family:'Liberation Serif', serif;font-size:15px;line-height:16px;color:#ff0000;letter-spacing:-0.946px;">XMin</div>
<div class="inp" style="left:1044px;top:388px;width:68px;height:33px"></div>
<div class="t" style="left:1053.75px;top:396.85px;font-family:'Liberation Sans', sans-serif;font-size:11.6px;line-height:13px;color:#111111;letter-spacing:0.000px;">0</div>
<div class="t" style="left:1160.00px;top:395.10px;font-family:'Liberation Serif', serif;font-size:15px;line-height:16px;color:#ff0000;letter-spacing:-0.709px;">XMax</div>
<div class="inp" style="left:1198px;top:388px;width:67px;height:33px"></div>
<div class="t" style="left:1205.80px;top:396.85px;font-family:'Liberation Sans', sans-serif;font-size:11.6px;line-height:13px;color:#111111;letter-spacing:0.976px;">65535</div>
<div class="t" style="left:1331.70px;top:395.10px;font-family:'Liberation Serif', serif;font-size:15px;line-height:16px;color:#ff0000;letter-spacing:-0.879px;">YMin</div>
<div class="inp" style="left:1366px;top:388px;width:90px;height:33px"></div>
<div class="t" style="left:1375.60px;top:396.85px;font-family:'Liberation Sans', sans-serif;font-size:11.6px;line-height:13px;color:#111111;letter-spacing:0.000px;">0</div>
<div class="t" style="left:1519.80px;top:395.10px;font-family:'Liberation Serif', serif;font-size:15px;line-height:16px;color:#ff0000;letter-spacing:-0.543px;">YMax</div>
<div class="inp" style="left:1558px;top:388px;width:89px;height:33px"></div>
<div class="t" style="left:1566.70px;top:396.85px;font-family:'Liberation Sans', sans-serif;font-size:11.6px;line-height:13px;color:#111111;letter-spacing:0.000px;">6</div>
<div class="btn" style="left:1775px;top:393px;width:139px;height:23px"></div>
<div class="t" style="left:1798.38px;top:397.10px;font-family:'Liberation Sans', sans-serif;font-size:11.6px;line-height:13px;color:#2e3436;letter-spacing:0.459px;">What are these?</div>
<div class="btn" style="left:6px;top:435px;width:157px;height:23px"></div>
<div class="t" style="left:19.40px;top:439.85px;font-family:'Liberation Sans', sans-serif;font-size:11.6px;line-height:13px;color:#1e2224;letter-spacing:0.396px;">Update Rate (8 secs)</div>
<svg style="left:143.8px;top:443.7px" width="8.4" height="6" viewBox="0 0 10 6"><path d="M1 0.9 L5 4.9 L9 0.9" stroke="#1e2224" stroke-width="1.9" fill="none"/></svg>
<div class="btn" style="left:438px;top:436px;width:141px;height:22px"></div>
<div class="t" style="left:460.51px;top:440.05px;font-family:'Liberation Sans', sans-serif;font-size:11.6px;line-height:13px;color:#2e3436;letter-spacing:0.318px;">Auto Update OFF</div>
<div class="btn" style="left:6px;top:973px;width:154px;height:23px"></div>
<div class="t" style="left:30.09px;top:977.00px;font-family:'Liberation Sans', sans-serif;font-size:11.6px;line-height:13px;color:#2e3436;letter-spacing:0.405px;">Empty Log Window</div>
<div class="btn" style="left:166px;top:973px;width:192px;height:23px"></div>
<div class="t" style="left:189.40px;top:977.00px;font-family:'Liberation Sans', sans-serif;font-size:11.6px;line-height:13px;color:#2e3436;letter-spacing:0.334px;">Send Log Window to ELog</div>
<div class="btn" style="left:362px;top:973px;width:86px;height:23px"></div>
<div class="t" style="left:386.92px;top:977.00px;font-family:'Liberation Sans', sans-serif;font-size:11.6px;line-height:13px;color:#2e3436;letter-spacing:-0.028px;">Reload</div>
<div class="btn" style="left:452px;top:973px;width:79px;height:23px"></div>
<div class="t" style="left:476.04px;top:977.00px;font-family:'Liberation Sans', sans-serif;font-size:11.6px;line-height:13px;color:#2e3436;letter-spacing:-0.010px;">Reset</div>
<div class="btn" style="left:535px;top:973px;width:132px;height:23px"></div>
<div class="t" style="left:558.31px;top:977.00px;font-family:'Liberation Sans', sans-serif;font-size:11.6px;line-height:13px;color:#2e3436;letter-spacing:0.422px;">Show Variables</div>
<div class="btn" style="left:671px;top:973px;width:149px;height:23px"></div>
<div class="t" style="left:694.75px;top:977.00px;font-family:'Liberation Sans', sans-serif;font-size:11.6px;line-height:13px;color:#2e3436;letter-spacing:0.360px;">Show Log Window</div>
<div class="btn" style="left:825px;top:973px;width:132px;height:23px"></div>
<div class="t" style="left:848.66px;top:977.00px;font-family:'Liberation Sans', sans-serif;font-size:11.6px;line-height:13px;color:#2e3436;letter-spacing:0.318px;">Enable Logging</div>
<div class="btn" style="left:1748px;top:973px;width:166px;height:23px"></div>
<div class="t" style="left:1772.21px;top:977.00px;font-family:'Liberation Sans', sans-serif;font-size:11.6px;line-height:13px;color:#2e3436;letter-spacing:0.513px;">How to use this page</div>
<div class="t" style="left:1655.30px;top:1008.10px;font-family:'Liberation Serif', serif;font-size:15px;line-height:16px;color:#ff0000;letter-spacing:0.500px;">Last Updated: March 13, 2020 00:22:10</div>
<div class="a" style="left:6px;top:1038px;width:1908px;height:2px;background:#4f5358"></div>
<div class="a" style="left:8px;top:1048px;width:1px;height:1px;background:#555"></div>
<div class="t" style="left:8.10px;top:1050.00px;font-family:'Liberation Serif', serif;font-size:15px;line-height:16px;color:#0000ee;letter-spacing:0.383px;">Home</div>
<div class="a" style="left:8px;top:1064px;width:39px;height:1px;background:#0000ee"></div>
<div class="a" style="left:8px;top:474px;width:1904px;height:484px;background:#fff"></div>
<div class="a" style="left:6px;top:472px;width:1px;height:488px;background:#ff0000"></div>
<div class="a" style="left:7px;top:472px;width:1px;height:488px;background:#b00000"></div>
<div class="a" style="left:959px;top:472px;width:1px;height:488px;background:#ff0000"></div>
<div class="a" style="left:960px;top:472px;width:1px;height:488px;background:#b00000"></div>
<div class="a" style="left:1912px;top:472px;width:1px;height:488px;background:#ff0000"></div>
<div class="a" style="left:1913px;top:472px;width:1px;height:488px;background:#b00000"></div>
<div class="a" style="left:6px;top:472px;width:1908px;height:1px;background:#ff0000"></div>
<div class="a" style="left:6px;top:473px;width:1908px;height:1px;background:#b00000"></div>
<div class="a" style="left:6px;top:634px;width:1908px;height:1px;background:#ff0000"></div>
<div class="a" style="left:6px;top:635px;width:1908px;height:1px;background:#b00000"></div>
<div class="a" style="left:6px;top:796px;width:1908px;height:1px;background:#ff0000"></div>
<div class="a" style="left:6px;top:797px;width:1908px;height:1px;background:#b00000"></div>
<div class="a" style="left:6px;top:958px;width:1908px;height:1px;background:#ff0000"></div>
<div class="a" style="left:6px;top:959px;width:1908px;height:1px;background:#b00000"></div>
<svg style="left:0;top:0" width="1920" height="1080" viewBox="0 0 1920 1080"><path d="M202 594.5 H766" stroke="#ebebeb" stroke-width="1"/><path d="M202 573.5 H766" stroke="#ebebeb" stroke-width="1"/><path d="M202 552.5 H766" stroke="#ebebeb" stroke-width="1"/><path d="M202 531.5 H766" stroke="#ebebeb" stroke-width="1"/><path d="M202 511 H766" stroke="#ebebeb" stroke-width="1"/><path d="M287.5 490 V615" stroke="#ebebeb" stroke-width="1"/><path d="M374.5 490 V615" stroke="#ebebeb" stroke-width="1"/><path d="M460.5 490 V615" stroke="#ebebeb" stroke-width="1"/><path d="M546.5 490 V615" stroke="#ebebeb" stroke-width="1"/><path d="M632.5 490 V615" stroke="#ebebeb" stroke-width="1"/><path d="M718.5 490 V615" stroke="#ebebeb" stroke-width="1"/><rect x="201" y="489" width="566" height="127" fill="none" stroke="#808080" stroke-width="2"/><path d="M202 615.5 H465.00 M465.00 615.52 L474.00 615.52 L474.25 601.15 L475.25 601.15 L475.50 615.52 L478.12 615.52 L478.38 592.40 L479.00 592.40 L479.38 615.52 L479.75 615.52 L480.00 592.40 L480.62 601.15 L481.25 592.40 L481.88 592.40 L482.50 592.40 L482.88 491.15 L483.38 491.15 L483.75 527.40 L484.38 566.15 L485.00 552.40 L486.00 532.40 L486.88 521.77 L487.50 521.62 L488.12 523.65 L488.75 525.28 L489.38 529.60 L490.00 530.52 L490.62 532.15 L491.25 530.93 L491.88 531.77 L492.50 530.85 L493.12 533.02 L493.75 533.72 L494.38 531.33 L495.00 532.40 L495.62 534.34 L496.25 532.52 L496.88 534.27 L497.50 532.92 L498.12 534.36 L498.75 534.90 L499.38 535.16 L500.00 538.65 L500.62 540.85 L501.25 540.52 L501.88 542.26 L502.50 539.99 L503.12 541.77 L503.75 541.39 L504.38 539.48 L505.00 537.40 L505.62 538.53 L506.25 542.40 L506.88 545.56 L507.50 547.00 L508.12 546.53 L508.75 548.65 L509.38 547.87 L510.00 546.15 L510.62 545.20 L511.25 541.15 L512.25 543.65 L513.12 546.15 L513.75 546.33 L514.38 543.76 L515.00 543.65 L515.62 544.51 L516.25 542.40 L516.88 543.52 L517.50 541.43 L518.12 543.28 L518.75 542.40 L519.38 540.34 L520.00 540.32 L520.62 538.65 L521.25 536.43 L521.88 537.80 L522.50 536.15 L523.12 534.78 L523.75 536.60 L524.38 534.90 L525.00 534.86 L525.62 531.40 L526.25 531.15 L526.88 529.62 L527.50 529.97 L528.12 532.31 L528.75 530.52 L529.38 532.09 L530.00 533.00 L530.62 532.40 L531.25 531.98 L531.88 532.21 L532.50 533.65 L533.12 532.91 L533.75 532.99 L534.38 535.22 L535.00 534.27 L535.62 532.66 L536.25 535.25 L536.88 535.16 L537.50 534.27 L538.12 534.00 L538.75 536.78 L539.38 535.19 L540.00 537.40 L540.62 537.27 L541.25 537.77 L541.88 540.56 L542.50 541.15 L543.12 541.67 L543.75 542.09 L544.38 544.61 L545.00 544.90 L545.62 544.32 L546.25 545.78 L546.88 547.40 L547.50 548.43 L548.12 550.52 L548.75 554.69 L549.38 555.56 L550.00 559.90 L550.62 567.09 L551.25 572.40 L551.88 582.77 L552.50 591.15 L553.12 615.52 L565.00 615.52" fill="none" stroke="#3c3cf2" stroke-width="1.05" stroke-linejoin="miter"/><path d="M565 615.5 H766" stroke="#3c3cf2" stroke-width="1.05"/><path d="M766.6 480.0 L776.3000000000001 489.7 L766.6 499.4 L756.9 489.7Z" fill="#ff0000"/></svg>
<div class="a" style="left:667px;top:497px;width:14px;height:12px;border:1px solid #cccccc;background:#fffff8"></div>
<div class="a" style="left:669px;top:499px;width:10px;height:8px;background:#0000ff"></div>
<div class="t" style="left:685.40px;top:496.00px;font-family:'Liberation Serif', serif;font-size:12.2px;line-height:14px;color:#808080;letter-spacing:1.008px;">aida02 1.8.H</div>
<div class="t" style="left:185.50px;top:608.20px;font-family:'Liberation Serif', serif;font-size:12.2px;line-height:14px;color:#545454;letter-spacing:0.000px;">0</div>
<div class="t" style="left:185.50px;top:587.33px;font-family:'Liberation Serif', serif;font-size:12.2px;line-height:14px;color:#545454;letter-spacing:0.000px;">1</div>
<div class="t" style="left:185.50px;top:566.46px;font-family:'Liberation Serif', serif;font-size:12.2px;line-height:14px;color:#545454;letter-spacing:0.000px;">2</div>
<div class="t" style="left:185.50px;top:545.59px;font-family:'Liberation Serif', serif;font-size:12.2px;line-height:14px;color:#545454;letter-spacing:0.000px;">3</div>
<div class="t" style="left:185.50px;top:524.72px;font-family:'Liberation Serif', serif;font-size:12.2px;line-height:14px;color:#545454;letter-spacing:0.000px;">4</div>
<div class="t" style="left:185.50px;top:503.85px;font-family:'Liberation Serif', serif;font-size:12.2px;line-height:14px;color:#545454;letter-spacing:0.000px;">5</div>
<div class="t" style="left:185.50px;top:482.98px;font-family:'Liberation Serif', serif;font-size:12.2px;line-height:14px;color:#545454;letter-spacing:0.000px;">6</div>
<div class="t" style="left:198.50px;top:619.00px;font-family:'Liberation Serif', serif;font-size:12.2px;line-height:14px;color:#545454;letter-spacing:0.000px;">0</div>
<div class="t" style="left:269.65px;top:619.00px;font-family:'Liberation Serif', serif;font-size:12.2px;line-height:14px;color:#545454;letter-spacing:1.181px;">10000</div>
<div class="t" style="left:356.85px;top:619.00px;font-family:'Liberation Serif', serif;font-size:12.2px;line-height:14px;color:#545454;letter-spacing:0.931px;">20000</div>
<div class="t" style="left:443.05px;top:619.00px;font-family:'Liberation Serif', serif;font-size:12.2px;line-height:14px;color:#545454;letter-spacing:0.931px;">30000</div>
<div class="t" style="left:529.25px;top:619.00px;font-family:'Liberation Serif', serif;font-size:12.2px;line-height:14px;color:#545454;letter-spacing:0.931px;">40000</div>
<div class="t" style="left:615.45px;top:619.00px;font-family:'Liberation Serif', serif;font-size:12.2px;line-height:14px;color:#545454;letter-spacing:0.931px;">50000</div>
<div class="t" style="left:701.65px;top:619.00px;font-family:'Liberation Serif', serif;font-size:12.2px;line-height:14px;color:#545454;letter-spacing:0.931px;">60000</div>
<svg style="left:0;top:0" width="1920" height="1080" viewBox="0 0 1920 1080"><path d="M1154 594.5 H1718" stroke="#ebebeb" stroke-width="1"/><path d="M1154 573.5 H1718" stroke="#ebebeb" stroke-width="1"/><path d="M1154 552.5 H1718" stroke="#ebebeb" stroke-width="1"/><path d="M1154 531.5 H1718" stroke="#ebebeb" stroke-width="1"/><path d="M1154 511 H1718" stroke="#ebebeb" stroke-width="1"/><path d="M1239.5 490 V615" stroke="#ebebeb" stroke-width="1"/><path d="M1326.5 490 V615" stroke="#ebebeb" stroke-width="1"/><path d="M1412.5 490 V615" stroke="#ebebeb" stroke-width="1"/><path d="M1498.5 490 V615" stroke="#ebebeb" stroke-width="1"/><path d="M1584.5 490 V615" stroke="#ebebeb" stroke-width="1"/><path d="M1670.5 490 V615" stroke="#ebebeb" stroke-width="1"/><rect x="1153" y="489" width="566" height="127" fill="none" stroke="#808080" stroke-width="2"/><path d="M1154 615.5 H1420.00 M1420.00 615.52 L1434.00 615.52 L1434.75 563.65 L1435.62 518.65 L1436.25 542.40 L1436.88 555.33 L1437.50 569.90 L1438.50 552.40 L1439.38 518.02 L1440.00 519.54 L1440.62 519.69 L1441.25 521.15 L1441.88 520.65 L1442.50 522.16 L1443.12 523.02 L1443.75 524.90 L1444.38 526.06 L1445.00 523.97 L1445.62 526.26 L1446.25 526.15 L1446.88 525.20 L1447.50 528.01 L1448.12 527.40 L1448.75 529.59 L1449.38 529.97 L1450.00 529.27 L1450.62 530.18 L1451.25 529.37 L1451.88 531.13 L1452.50 531.15 L1453.12 531.21 L1453.75 531.82 L1454.38 532.54 L1455.00 533.33 L1455.62 534.33 L1456.25 536.15 L1456.88 536.54 L1457.50 539.26 L1458.12 539.53 L1458.75 541.22 L1459.38 541.10 L1460.00 540.46 L1460.62 542.40 L1461.25 542.43 L1461.88 540.91 L1462.50 538.65 L1463.12 539.48 L1463.75 541.77 L1464.38 540.78 L1465.00 536.28 L1465.62 534.90 L1466.25 533.65 L1466.88 534.81 L1467.50 537.40 L1468.12 535.95 L1468.75 536.49 L1469.38 536.52 L1470.00 534.27 L1470.62 534.51 L1471.25 534.11 L1471.88 532.75 L1472.50 532.30 L1473.12 531.30 L1473.75 532.40 L1474.38 530.68 L1475.00 527.40 L1475.62 525.55 L1476.25 525.41 L1476.88 526.02 L1477.50 523.28 L1478.12 523.65 L1478.75 525.22 L1479.38 523.77 L1480.00 523.08 L1480.62 525.24 L1481.25 526.28 L1481.88 524.69 L1482.50 525.52 L1483.12 525.06 L1483.75 524.81 L1484.38 527.22 L1485.00 527.08 L1485.62 527.68 L1486.25 527.40 L1486.88 526.24 L1487.50 527.60 L1488.12 529.44 L1488.75 528.32 L1489.38 528.28 L1490.00 531.06 L1490.62 530.50 L1491.25 531.61 L1491.88 531.80 L1492.50 531.15 L1493.12 530.68 L1493.75 533.91 L1494.38 534.59 L1495.00 533.91 L1495.62 535.77 L1496.25 536.15 L1496.88 535.77 L1497.50 536.81 L1498.12 540.00 L1498.75 538.90 L1499.38 541.87 L1500.00 541.47 L1500.62 544.28 L1501.25 543.65 L1501.88 550.87 L1502.50 555.51 L1503.12 560.94 L1503.75 566.15 L1504.38 583.44 L1505.00 597.40 L1505.62 615.52 L1520.00 615.52" fill="none" stroke="#3c3cf2" stroke-width="1.05" stroke-linejoin="miter"/><path d="M1520 615.5 H1718" stroke="#3c3cf2" stroke-width="1.05"/><path d="M1718.6 480.0 L1728.3 489.7 L1718.6 499.4 L1708.8999999999999 489.7Z" fill="#ff0000"/></svg>
<div class="a" style="left:1619px;top:497px;width:14px;height:12px;border:1px solid #cccccc;background:#fffff8"></div>
<div class="a" style="left:1621px;top:499px;width:10px;height:8px;background:#0000ff"></div>
<div class="t" style="left:1637.40px;top:496.00px;font-family:'Liberation Serif', serif;font-size:12.2px;line-height:14px;color:#808080;letter-spacing:1.008px;">aida04 1.8.H</div>
<div class="t" style="left:1137.50px;top:608.20px;font-family:'Liberation Serif', serif;font-size:12.2px;line-height:14px;color:#545454;letter-spacing:0.000px;">0</div>
<div class="t" style="left:1137.50px;top:587.33px;font-family:'Liberation Serif', serif;font-size:12.2px;line-height:14px;color:#545454;letter-spacing:0.000px;">1</div>
<div class="t" style="left:1137.50px;top:566.46px;font-family:'Liberation Serif', serif;font-size:12.2px;line-height:14px;color:#545454;letter-spacing:0.000px;">2</div>
<div class="t" style="left:1137.50px;top:545.59px;font-family:'Liberation Serif', serif;font-size:12.2px;line-height:14px;color:#545454;letter-spacing:0.000px;">3</div>
<div class="t" style="left:1137.50px;top:524.72px;font-family:'Liberation Serif', serif;font-size:12.2px;line-height:14px;color:#545454;letter-spacing:0.000px;">4</div>
<div class="t" style="left:1137.50px;top:503.85px;font-family:'Liberation Serif', serif;font-size:12.2px;line-height:14px;color:#545454;letter-spacing:0.000px;">5</div>
<div class="t" style="left:1137.50px;top:482.98px;font-family:'Liberation Serif', serif;font-size:12.2px;line-height:14px;color:#545454;letter-spacing:0.000px;">6</div>
<div class="t" style="left:1150.50px;top:619.00px;font-family:'Liberation Serif', serif;font-size:12.2px;line-height:14px;color:#545454;letter-spacing:0.000px;">0</div>
<div class="t" style="left:1221.65px;top:619.00px;font-family:'Liberation Serif', serif;font-size:12.2px;line-height:14px;color:#545454;letter-spacing:1.181px;">10000</div>
<div class="t" style="left:1308.85px;top:619.00px;font-family:'Liberation Serif', serif;font-size:12.2px;line-height:14px;color:#545454;letter-spacing:0.931px;">20000</div>
<div class="t" style="left:1395.05px;top:619.00px;font-family:'Liberation Serif', serif;font-size:12.2px;line-height:14px;color:#545454;letter-spacing:0.931px;">30000</div>
<div class="t" style="left:1481.25px;top:619.00px;font-family:'Liberation Serif', serif;font-size:12.2px;line-height:14px;color:#545454;letter-spacing:0.931px;">40000</div>
<div class="t" style="left:1567.45px;top:619.00px;font-family:'Liberation Serif', serif;font-size:12.2px;line-height:14px;color:#545454;letter-spacing:0.931px;">50000</div>
<div class="t" style="left:1653.65px;top:619.00px;font-family:'Liberation Serif', serif;font-size:12.2px;line-height:14px;color:#545454;letter-spacing:0.931px;">60000</div>
<svg style="left:0;top:0" width="1920" height="1080" viewBox="0 0 1920 1080"><path d="M202 756.5 H766" stroke="#ebebeb" stroke-width="1"/><path d="M202 735.5 H766" stroke="#ebebeb" stroke-width="1"/><path d="M202 714.5 H766" stroke="#ebebeb" stroke-width="1"/><path d="M202 693.5 H766" stroke="#ebebeb" stroke-width="1"/><path d="M202 673 H766" stroke="#ebebeb" stroke-width="1"/><path d="M287.5 652 V777" stroke="#ebebeb" stroke-width="1"/><path d="M374.5 652 V777" stroke="#ebebeb" stroke-width="1"/><path d="M460.5 652 V777" stroke="#ebebeb" stroke-width="1"/><path d="M546.5 652 V777" stroke="#ebebeb" stroke-width="1"/><path d="M632.5 652 V777" stroke="#ebebeb" stroke-width="1"/><path d="M718.5 652 V777" stroke="#ebebeb" stroke-width="1"/><rect x="201" y="651" width="566" height="127" fill="none" stroke="#808080" stroke-width="2"/><path d="M202 777.5 H465.00 M465.00 777.52 L483.12 777.52 L483.75 761.90 L484.38 703.77 L485.00 721.90 L485.62 739.40 L486.50 739.40 L487.25 724.40 L487.75 695.65 L488.56 695.11 L489.38 696.90 L490.00 697.05 L490.62 699.27 L491.25 699.40 L491.88 698.49 L492.50 700.98 L493.12 701.19 L493.75 700.65 L494.38 700.61 L495.00 702.70 L495.62 703.33 L496.25 703.15 L496.88 702.31 L497.50 703.06 L498.12 701.74 L498.75 701.90 L499.38 702.71 L500.00 703.42 L500.62 704.17 L501.25 703.77 L501.88 705.80 L502.50 703.19 L503.12 704.07 L503.75 705.65 L504.38 706.52 L505.00 704.93 L505.62 707.61 L506.25 706.90 L506.88 705.28 L507.50 704.05 L508.12 705.09 L508.75 703.15 L509.38 703.31 L510.00 703.71 L510.62 704.69 L511.25 705.65 L511.88 705.95 L512.50 704.44 L513.12 704.13 L513.75 705.02 L514.38 704.72 L515.00 703.85 L515.62 701.90 L516.25 706.90 L516.88 707.02 L517.50 709.09 L518.12 709.64 L518.75 710.02 L519.38 708.42 L520.00 709.88 L520.62 708.15 L521.25 708.15 L521.88 712.69 L522.50 712.52 L523.12 713.90 L523.75 716.22 L524.38 715.65 L525.00 716.03 L525.62 714.46 L526.25 714.40 L526.88 719.57 L527.50 721.90 L528.12 721.37 L528.75 721.96 L529.38 721.16 L530.00 723.15 L530.62 724.49 L531.25 723.77 L531.88 729.52 L532.50 731.90 L533.12 733.63 L533.75 734.68 L534.38 738.15 L535.00 734.40 L535.62 731.90 L536.25 736.21 L536.88 739.40 L537.50 735.75 L538.12 734.40 L538.75 736.77 L539.38 738.08 L540.00 739.40 L540.62 740.26 L541.25 743.15 L541.88 746.09 L542.50 750.65 L543.12 753.17 L543.75 754.40 L544.38 759.21 L545.00 761.90 L545.62 759.13 L546.25 754.40 L546.88 763.15 L547.50 777.52 L565.00 777.52" fill="none" stroke="#3c3cf2" stroke-width="1.05" stroke-linejoin="miter"/><path d="M565 777.5 H766" stroke="#3c3cf2" stroke-width="1.05"/><path d="M766.6 642.0 L776.3000000000001 651.7 L766.6 661.4000000000001 L756.9 651.7Z" fill="#ff0000"/></svg>
<div class="a" style="left:667px;top:659px;width:14px;height:12px;border:1px solid #cccccc;background:#fffff8"></div>
<div class="a" style="left:669px;top:661px;width:10px;height:8px;background:#0000ff"></div>
<div class="t" style="left:685.40px;top:658.00px;font-family:'Liberation Serif', serif;font-size:12.2px;line-height:14px;color:#808080;letter-spacing:1.008px;">aida06 1.8.H</div>
<div class="t" style="left:185.50px;top:770.20px;font-family:'Liberation Serif', serif;font-size:12.2px;line-height:14px;color:#545454;letter-spacing:0.000px;">0</div>
<div class="t" style="left:185.50px;top:749.33px;font-family:'Liberation Serif', serif;font-size:12.2px;line-height:14px;color:#545454;letter-spacing:0.000px;">1</div>
<div class="t" style="left:185.50px;top:728.46px;font-family:'Liberation Serif', serif;font-size:12.2px;line-height:14px;color:#545454;letter-spacing:0.000px;">2</div>
<div class="t" style="left:185.50px;top:707.59px;font-family:'Liberation Serif', serif;font-size:12.2px;line-height:14px;color:#545454;letter-spacing:0.000px;">3</div>
<div class="t" style="left:185.50px;top:686.72px;font-family:'Liberation Serif', serif;font-size:12.2px;line-height:14px;color:#545454;letter-spacing:0.000px;">4</div>
<div class="t" style="left:185.50px;top:665.85px;font-family:'Liberation Serif', serif;font-size:12.2px;line-height:14px;color:#545454;letter-spacing:0.000px;">5</div>
<div class="t" style="left:185.50px;top:644.98px;font-family:'Liberation Serif', serif;font-size:12.2px;line-height:14px;color:#545454;letter-spacing:0.000px;">6</div>
<div class="t" style="left:198.50px;top:781.00px;font-family:'Liberation Serif', serif;font-size:12.2px;line-height:14px;color:#545454;letter-spacing:0.000px;">0</div>
<div class="t" style="left:269.65px;top:781.00px;font-family:'Liberation Serif', serif;font-size:12.2px;line-height:14px;color:#545454;letter-spacing:1.181px;">10000</div>
<div class="t" style="left:356.85px;top:781.00px;font-family:'Liberation Serif', serif;font-size:12.2px;line-height:14px;color:#545454;letter-spacing:0.931px;">20000</div>
<div class="t" style="left:443.05px;top:781.00px;font-family:'Liberation Serif', serif;font-size:12.2px;line-height:14px;color:#545454;letter-spacing:0.931px;">30000</div>
<div class="t" style="left:529.25px;top:781.00px;font-family:'Liberation Serif', serif;font-size:12.2px;line-height:14px;color:#545454;letter-spacing:0.931px;">40000</div>
<div class="t" style="left:615.45px;top:781.00px;font-family:'Liberation Serif', serif;font-size:12.2px;line-height:14px;color:#545454;letter-spacing:0.931px;">50000</div>
<div class="t" style="left:701.65px;top:781.00px;font-family:'Liberation Serif', serif;font-size:12.2px;line-height:14px;color:#545454;letter-spacing:0.931px;">60000</div>
<svg style="left:0;top:0" width="1920" height="1080" viewBox="0 0 1920 1080"><path d="M1154 756.5 H1718" stroke="#ebebeb" stroke-width="1"/><path d="M1154 735.5 H1718" stroke="#ebebeb" stroke-width="1"/><path d="M1154 714.5 H1718" stroke="#ebebeb" stroke-width="1"/><path d="M1154 693.5 H1718" stroke="#ebebeb" stroke-width="1"/><path d="M1154 673 H1718" stroke="#ebebeb" stroke-width="1"/><path d="M1239.5 652 V777" stroke="#ebebeb" stroke-width="1"/><path d="M1326.5 652 V777" stroke="#ebebeb" stroke-width="1"/><path d="M1412.5 652 V777" stroke="#ebebeb" stroke-width="1"/><path d="M1498.5 652 V777" stroke="#ebebeb" stroke-width="1"/><path d="M1584.5 652 V777" stroke="#ebebeb" stroke-width="1"/><path d="M1670.5 652 V777" stroke="#ebebeb" stroke-width="1"/><rect x="1153" y="651" width="566" height="127" fill="none" stroke="#808080" stroke-width="2"/><path d="M1154 777.5 H1420.00 M1420.00 777.52 L1434.00 777.52 L1434.75 718.15 L1435.62 721.90 L1436.25 743.15 L1436.88 721.90 L1437.50 711.64 L1438.12 703.15 L1438.75 687.52 L1439.38 690.90 L1440.00 691.90 L1440.62 693.85 L1441.25 694.27 L1441.88 692.30 L1442.50 693.77 L1443.12 691.33 L1443.75 690.87 L1444.38 690.65 L1445.00 693.86 L1445.62 696.27 L1446.25 695.06 L1446.88 696.11 L1447.50 698.56 L1448.12 696.14 L1448.75 698.15 L1449.38 699.73 L1450.00 699.11 L1450.62 698.61 L1451.25 698.47 L1451.88 700.57 L1452.50 700.02 L1453.12 699.23 L1453.75 698.60 L1454.38 698.92 L1455.00 698.50 L1455.62 698.38 L1456.25 699.70 L1456.88 698.97 L1457.50 698.15 L1458.12 696.76 L1458.75 699.17 L1459.38 699.62 L1460.00 698.77 L1460.62 700.78 L1461.25 700.07 L1461.88 699.19 L1462.50 700.33 L1463.12 699.27 L1463.75 700.65 L1464.38 699.76 L1465.00 702.15 L1465.62 700.72 L1466.25 700.31 L1466.88 702.48 L1467.50 701.90 L1468.12 702.39 L1468.75 701.20 L1469.38 700.04 L1470.00 701.27 L1470.62 702.11 L1471.25 701.90 L1471.88 703.15 L1472.50 706.90 L1473.12 706.34 L1473.75 705.88 L1474.38 706.30 L1475.00 708.15 L1475.62 710.10 L1476.25 708.41 L1476.88 710.44 L1477.50 711.90 L1478.12 709.42 L1478.75 708.77 L1479.38 713.70 L1480.00 716.24 L1480.62 719.40 L1481.25 720.61 L1481.88 722.29 L1482.50 721.90 L1483.12 722.58 L1483.75 724.17 L1484.38 727.79 L1485.00 728.15 L1485.62 726.79 L1486.25 729.14 L1486.88 727.45 L1487.50 729.40 L1488.12 730.99 L1488.75 730.34 L1489.38 734.56 L1490.00 734.40 L1490.62 736.67 L1491.25 737.63 L1491.88 738.51 L1492.50 739.40 L1493.12 740.02 L1493.75 743.77 L1494.38 747.56 L1495.00 753.77 L1495.62 757.17 L1496.25 761.90 L1496.88 759.35 L1497.50 754.40 L1498.12 763.15 L1499.00 777.52 L1520.00 777.52" fill="none" stroke="#3c3cf2" stroke-width="1.05" stroke-linejoin="miter"/><path d="M1520 777.5 H1718" stroke="#3c3cf2" stroke-width="1.05"/><path d="M1718.6 642.0 L1728.3 651.7 L1718.6 661.4000000000001 L1708.8999999999999 651.7Z" fill="#ff0000"/></svg>
<div class="a" style="left:1619px;top:659px;width:14px;height:12px;border:1px solid #cccccc;background:#fffff8"></div>
<div class="a" style="left:1621px;top:661px;width:10px;height:8px;background:#0000ff"></div>
<div class="t" style="left:1637.40px;top:658.00px;font-family:'Liberation Serif', serif;font-size:12.2px;line-height:14px;color:#808080;letter-spacing:1.008px;">aida08 1.8.H</div>
<div class="t" style="left:1137.50px;top:770.20px;font-family:'Liberation Serif', serif;font-size:12.2px;line-height:14px;color:#545454;letter-spacing:0.000px;">0</div>
<div class="t" style="left:1137.50px;top:749.33px;font-family:'Liberation Serif', serif;font-size:12.2px;line-height:14px;color:#545454;letter-spacing:0.000px;">1</div>
<div class="t" style="left:1137.50px;top:728.46px;font-family:'Liberation Serif', serif;font-size:12.2px;line-height:14px;color:#545454;letter-spacing:0.000px;">2</div>
<div class="t" style="left:1137.50px;top:707.59px;font-family:'Liberation Serif', serif;font-size:12.2px;line-height:14px;color:#545454;letter-spacing:0.000px;">3</div>
<div class="t" style="left:1137.50px;top:686.72px;font-family:'Liberation Serif', serif;font-size:12.2px;line-height:14px;color:#545454;letter-spacing:0.000px;">4</div>
<div class="t" style="left:1137.50px;top:665.85px;font-family:'Liberation Serif', serif;font-size:12.2px;line-height:14px;color:#545454;letter-spacing:0.000px;">5</div>
<div class="t" style="left:1137.50px;top:644.98px;font-family:'Liberation Serif', serif;font-size:12.2px;line-height:14px;color:#545454;letter-spacing:0.000px;">6</div>
<div class="t" style="left:1150.50px;top:781.00px;font-family:'Liberation Serif', serif;font-size:12.2px;line-height:14px;color:#545454;letter-spacing:0.000px;">0</div>
<div class="t" style="left:1221.65px;top:781.00px;font-family:'Liberation Serif', serif;font-size:12.2px;line-height:14px;color:#545454;letter-spacing:1.181px;">10000</div>
<div class="t" style="left:1308.85px;top:781.00px;font-family:'Liberation Serif', serif;font-size:12.2px;line-height:14px;color:#545454;letter-spacing:0.931px;">20000</div>
<div class="t" style="left:1395.05px;top:781.00px;font-family:'Liberation Serif', serif;font-size:12.2px;line-height:14px;color:#545454;letter-spacing:0.931px;">30000</div>
<div class="t" style="left:1481.25px;top:781.00px;font-family:'Liberation Serif', serif;font-size:12.2px;line-height:14px;color:#545454;letter-spacing:0.931px;">40000</div>
<div class="t" style="left:1567.45px;top:781.00px;font-family:'Liberation Serif', serif;font-size:12.2px;line-height:14px;color:#545454;letter-spacing:0.931px;">50000</div>
<div class="t" style="left:1653.65px;top:781.00px;font-family:'Liberation Serif', serif;font-size:12.2px;line-height:14px;color:#545454;letter-spacing:0.931px;">60000</div>
<svg style="left:0;top:0" width="1920" height="1080" viewBox="0 0 1920 1080"><path d="M202 918.5 H766" stroke="#ebebeb" stroke-width="1"/><path d="M202 897.5 H766" stroke="#ebebeb" stroke-width="1"/><path d="M202 876.5 H766" stroke="#ebebeb" stroke-width="1"/><path d="M202 855.5 H766" stroke="#ebebeb" stroke-width="1"/><path d="M202 835 H766" stroke="#ebebeb" stroke-width="1"/><path d="M287.5 814 V939" stroke="#ebebeb" stroke-width="1"/><path d="M374.5 814 V939" stroke="#ebebeb" stroke-width="1"/><path d="M460.5 814 V939" stroke="#ebebeb" stroke-width="1"/><path d="M546.5 814 V939" stroke="#ebebeb" stroke-width="1"/><path d="M632.5 814 V939" stroke="#ebebeb" stroke-width="1"/><path d="M718.5 814 V939" stroke="#ebebeb" stroke-width="1"/><rect x="201" y="813" width="566" height="127" fill="none" stroke="#808080" stroke-width="2"/><path d="M202 939.5 H465.00 M465.00 939.52 L483.50 939.52 L483.75 882.65 L484.75 891.40 L485.62 925.15 L486.50 896.40 L486.88 873.90 L487.50 875.18 L488.12 873.90 L488.75 876.35 L489.38 877.65 L490.00 871.99 L490.62 867.65 L491.25 881.40 L491.88 883.93 L492.50 885.15 L493.12 884.46 L493.75 882.65 L494.38 883.54 L495.00 886.40 L495.62 885.08 L496.25 885.24 L496.88 886.40 L497.50 886.22 L498.12 883.27 L498.75 890.15 L499.75 883.27 L500.62 891.40 L501.25 891.01 L501.88 893.38 L502.50 893.90 L503.12 894.09 L503.75 894.12 L504.38 891.21 L505.00 892.02 L505.62 893.15 L506.25 895.15 L506.88 896.09 L507.50 892.93 L508.12 893.90 L508.75 892.53 L509.38 891.56 L510.00 891.40 L510.62 895.23 L511.25 900.15 L511.88 898.90 L512.50 898.74 L513.12 899.60 L513.75 898.90 L514.38 901.25 L515.00 901.36 L515.62 901.40 L516.25 900.25 L516.88 898.62 L517.50 896.40 L518.12 902.31 L518.75 905.15 L519.38 904.13 L520.00 904.56 L520.62 906.23 L521.25 905.15 L521.88 898.90 L522.50 905.15 L523.12 906.34 L523.75 905.13 L524.38 906.40 L525.00 906.93 L525.62 908.18 L526.25 910.15 L526.88 908.97 L527.50 906.40 L528.12 909.65 L528.75 915.15 L529.38 913.88 L530.00 911.40 L530.62 913.31 L531.25 912.76 L531.88 913.90 L532.50 913.91 L533.12 914.85 L533.75 916.40 L534.75 902.02 L535.25 923.90 L536.06 919.81 L536.88 916.40 L537.50 921.65 L538.12 925.15 L538.75 916.40 L539.38 939.52 L540.62 939.52 L565.00 939.52" fill="none" stroke="#3c3cf2" stroke-width="1.05" stroke-linejoin="miter"/><path d="M565 939.5 H766" stroke="#3c3cf2" stroke-width="1.05"/><path d="M766.6 804.0 L776.3000000000001 813.7 L766.6 823.4000000000001 L756.9 813.7Z" fill="#ff0000"/></svg>
<div class="a" style="left:667px;top:821px;width:14px;height:12px;border:1px solid #cccccc;background:#fffff8"></div>
<div class="a" style="left:669px;top:823px;width:10px;height:8px;background:#0000ff"></div>
<div class="t" style="left:685.40px;top:820.00px;font-family:'Liberation Serif', serif;font-size:12.2px;line-height:14px;color:#808080;letter-spacing:1.008px;">aida10 1.8.H</div>
<div class="t" style="left:185.50px;top:932.20px;font-family:'Liberation Serif', serif;font-size:12.2px;line-height:14px;color:#545454;letter-spacing:0.000px;">0</div>
<div class="t" style="left:185.50px;top:911.33px;font-family:'Liberation Serif', serif;font-size:12.2px;line-height:14px;color:#545454;letter-spacing:0.000px;">1</div>
<div class="t" style="left:185.50px;top:890.46px;font-family:'Liberation Serif', serif;font-size:12.2px;line-height:14px;color:#545454;letter-spacing:0.000px;">2</div>
<div class="t" style="left:185.50px;top:869.59px;font-family:'Liberation Serif', serif;font-size:12.2px;line-height:14px;color:#545454;letter-spacing:0.000px;">3</div>
<div class="t" style="left:185.50px;top:848.72px;font-family:'Liberation Serif', serif;font-size:12.2px;line-height:14px;color:#545454;letter-spacing:0.000px;">4</div>
<div class="t" style="left:185.50px;top:827.85px;font-family:'Liberation Serif', serif;font-size:12.2px;line-height:14px;color:#545454;letter-spacing:0.000px;">5</div>
<div class="t" style="left:185.50px;top:806.98px;font-family:'Liberation Serif', serif;font-size:12.2px;line-height:14px;color:#545454;letter-spacing:0.000px;">6</div>
<div class="t" style="left:198.50px;top:943.00px;font-family:'Liberation Serif', serif;font-size:12.2px;line-height:14px;color:#545454;letter-spacing:0.000px;">0</div>
<div class="t" style="left:269.65px;top:943.00px;font-family:'Liberation Serif', serif;font-size:12.2px;line-height:14px;color:#545454;letter-spacing:1.181px;">10000</div>
<div class="t" style="left:356.85px;top:943.00px;font-family:'Liberation Serif', serif;font-size:12.2px;line-height:14px;color:#545454;letter-spacing:0.931px;">20000</div>
<div class="t" style="left:443.05px;top:943.00px;font-family:'Liberation Serif', serif;font-size:12.2px;line-height:14px;color:#545454;letter-spacing:0.931px;">30000</div>
<div class="t" style="left:529.25px;top:943.00px;font-family:'Liberation Serif', serif;font-size:12.2px;line-height:14px;color:#545454;letter-spacing:0.931px;">40000</div>
<div class="t" style="left:615.45px;top:943.00px;font-family:'Liberation Serif', serif;font-size:12.2px;line-height:14px;color:#545454;letter-spacing:0.931px;">50000</div>
<div class="t" style="left:701.65px;top:943.00px;font-family:'Liberation Serif', serif;font-size:12.2px;line-height:14px;color:#545454;letter-spacing:0.931px;">60000</div>
<svg style="left:0;top:0" width="1920" height="1080" viewBox="0 0 1920 1080"><path d="M1154 918.5 H1718" stroke="#dedede" stroke-width="1"/><path d="M1154 897.5 H1718" stroke="#dedede" stroke-width="1"/><path d="M1154 876.5 H1718" stroke="#dedede" stroke-width="1"/><path d="M1154 855.5 H1718" stroke="#dedede" stroke-width="1"/><path d="M1154 835 H1718" stroke="#dedede" stroke-width="1"/><path d="M1239.5 814 V939" stroke="#dedede" stroke-width="1"/><path d="M1326.5 814 V939" stroke="#dedede" stroke-width="1"/><path d="M1412.5 814 V939" stroke="#dedede" stroke-width="1"/><path d="M1498.5 814 V939" stroke="#dedede" stroke-width="1"/><path d="M1584.5 814 V939" stroke="#dedede" stroke-width="1"/><path d="M1670.5 814 V939" stroke="#dedede" stroke-width="1"/><rect x="1153" y="813" width="566" height="127" fill="none" stroke="#000000" stroke-width="2"/><path d="M1154 939.5 H1420.00 M1420.00 939.52 L1435.62 939.52 L1435.62 875.77 L1436.25 897.21 L1436.88 916.40 L1437.50 918.59 L1438.12 923.90 L1438.75 878.90 L1439.38 878.15 L1440.00 875.77 L1440.62 875.92 L1441.25 878.64 L1441.88 878.90 L1442.50 879.71 L1443.12 881.40 L1443.75 881.10 L1444.38 877.13 L1445.00 877.02 L1445.62 879.04 L1446.25 883.90 L1446.88 885.18 L1447.50 883.73 L1448.12 884.65 L1448.75 886.40 L1449.38 887.53 L1450.00 887.83 L1450.62 888.70 L1451.25 886.96 L1451.88 889.54 L1452.50 888.90 L1453.12 889.19 L1453.75 889.66 L1454.38 890.28 L1455.00 892.65 L1455.62 894.16 L1456.25 895.48 L1456.88 893.12 L1457.50 895.15 L1458.12 893.42 L1458.75 888.90 L1459.38 891.08 L1460.00 890.37 L1460.62 893.54 L1461.25 893.90 L1461.88 894.92 L1462.50 895.00 L1463.12 894.01 L1463.75 895.13 L1464.38 895.97 L1465.00 895.15 L1465.62 894.35 L1466.25 890.95 L1466.88 890.15 L1467.50 897.65 L1468.12 899.23 L1468.75 899.72 L1469.38 898.67 L1470.00 897.71 L1470.62 899.23 L1471.25 898.90 L1471.88 899.12 L1472.50 903.00 L1473.12 903.89 L1473.75 905.15 L1474.38 906.17 L1475.00 904.62 L1475.62 904.15 L1476.25 905.15 L1476.88 902.09 L1477.50 902.02 L1478.12 916.40 L1478.75 914.85 L1479.38 911.77 L1480.00 907.65 L1480.62 908.57 L1481.25 909.72 L1481.88 914.61 L1482.50 915.15 L1483.12 913.71 L1483.75 908.90 L1484.38 907.61 L1485.00 908.36 L1485.62 906.40 L1486.25 916.40 L1486.88 915.73 L1487.50 917.69 L1488.12 916.40 L1488.75 925.15 L1489.38 925.48 L1490.00 926.32 L1490.62 925.69 L1491.25 925.15 L1491.50 939.52 L1520.00 939.52" fill="none" stroke="#3c3cf2" stroke-width="1.05" stroke-linejoin="miter"/><path d="M1520 939.5 H1718" stroke="#3c3cf2" stroke-width="1.05"/><path d="M1718.6 804.0 L1728.3 813.7 L1718.6 823.4000000000001 L1708.8999999999999 813.7Z" fill="#00ff00"/></svg>
<div class="a" style="left:1619px;top:821px;width:14px;height:12px;border:1px solid #cccccc;background:#fffff8"></div>
<div class="a" style="left:1621px;top:823px;width:10px;height:8px;background:#0000ff"></div>
<div class="t" style="left:1637.40px;top:820.00px;font-family:'Liberation Serif', serif;font-size:12.2px;line-height:14px;color:#000000;letter-spacing:1.008px;">aida12 1.8.H</div>
<div class="t" style="left:1137.50px;top:932.20px;font-family:'Liberation Serif', serif;font-size:12.2px;line-height:14px;color:#545454;letter-spacing:0.000px;">0</div>
<div class="t" style="left:1137.50px;top:911.33px;font-family:'Liberation Serif', serif;font-size:12.2px;line-height:14px;color:#545454;letter-spacing:0.000px;">1</div>
<div class="t" style="left:1137.50px;top:890.46px;font-family:'Liberation Serif', serif;font-size:12.2px;line-height:14px;color:#545454;letter-spacing:0.000px;">2</div>
<div class="t" style="left:1137.50px;top:869.59px;font-family:'Liberation Serif', serif;font-size:12.2px;line-height:14px;color:#545454;letter-spacing:0.000px;">3</div>
<div class="t" style="left:1137.50px;top:848.72px;font-family:'Liberation Serif', serif;font-size:12.2px;line-height:14px;color:#545454;letter-spacing:0.000px;">4</div>
<div class="t" style="left:1137.50px;top:827.85px;font-family:'Liberation Serif', serif;font-size:12.2px;line-height:14px;color:#545454;letter-spacing:0.000px;">5</div>
<div class="t" style="left:1137.50px;top:806.98px;font-family:'Liberation Serif', serif;font-size:12.2px;line-height:14px;color:#545454;letter-spacing:0.000px;">6</div>
<div class="t" style="left:1150.50px;top:943.00px;font-family:'Liberation Serif', serif;font-size:12.2px;line-height:14px;color:#545454;letter-spacing:0.000px;">0</div>
<div class="t" style="left:1221.65px;top:943.00px;font-family:'Liberation Serif', serif;font-size:12.2px;line-height:14px;color:#545454;letter-spacing:1.181px;">10000</div>
<div class="t" style="left:1308.85px;top:943.00px;font-family:'Liberation Serif', serif;font-size:12.2px;line-height:14px;color:#545454;letter-spacing:0.931px;">20000</div>
<div class="t" style="left:1395.05px;top:943.00px;font-family:'Liberation Serif', serif;font-size:12.2px;line-height:14px;color:#545454;letter-spacing:0.931px;">30000</div>
<div class="t" style="left:1481.25px;top:943.00px;font-family:'Liberation Serif', serif;font-size:12.2px;line-height:14px;color:#545454;letter-spacing:0.931px;">40000</div>
<div class="t" style="left:1567.45px;top:943.00px;font-family:'Liberation Serif', serif;font-size:12.2px;line-height:14px;color:#545454;letter-spacing:0.931px;">50000</div>
<div class="t" style="left:1653.65px;top:943.00px;font-family:'Liberation Serif', serif;font-size:12.2px;line-height:14px;color:#545454;letter-spacing:0.931px;">60000</div>
</body></html>
